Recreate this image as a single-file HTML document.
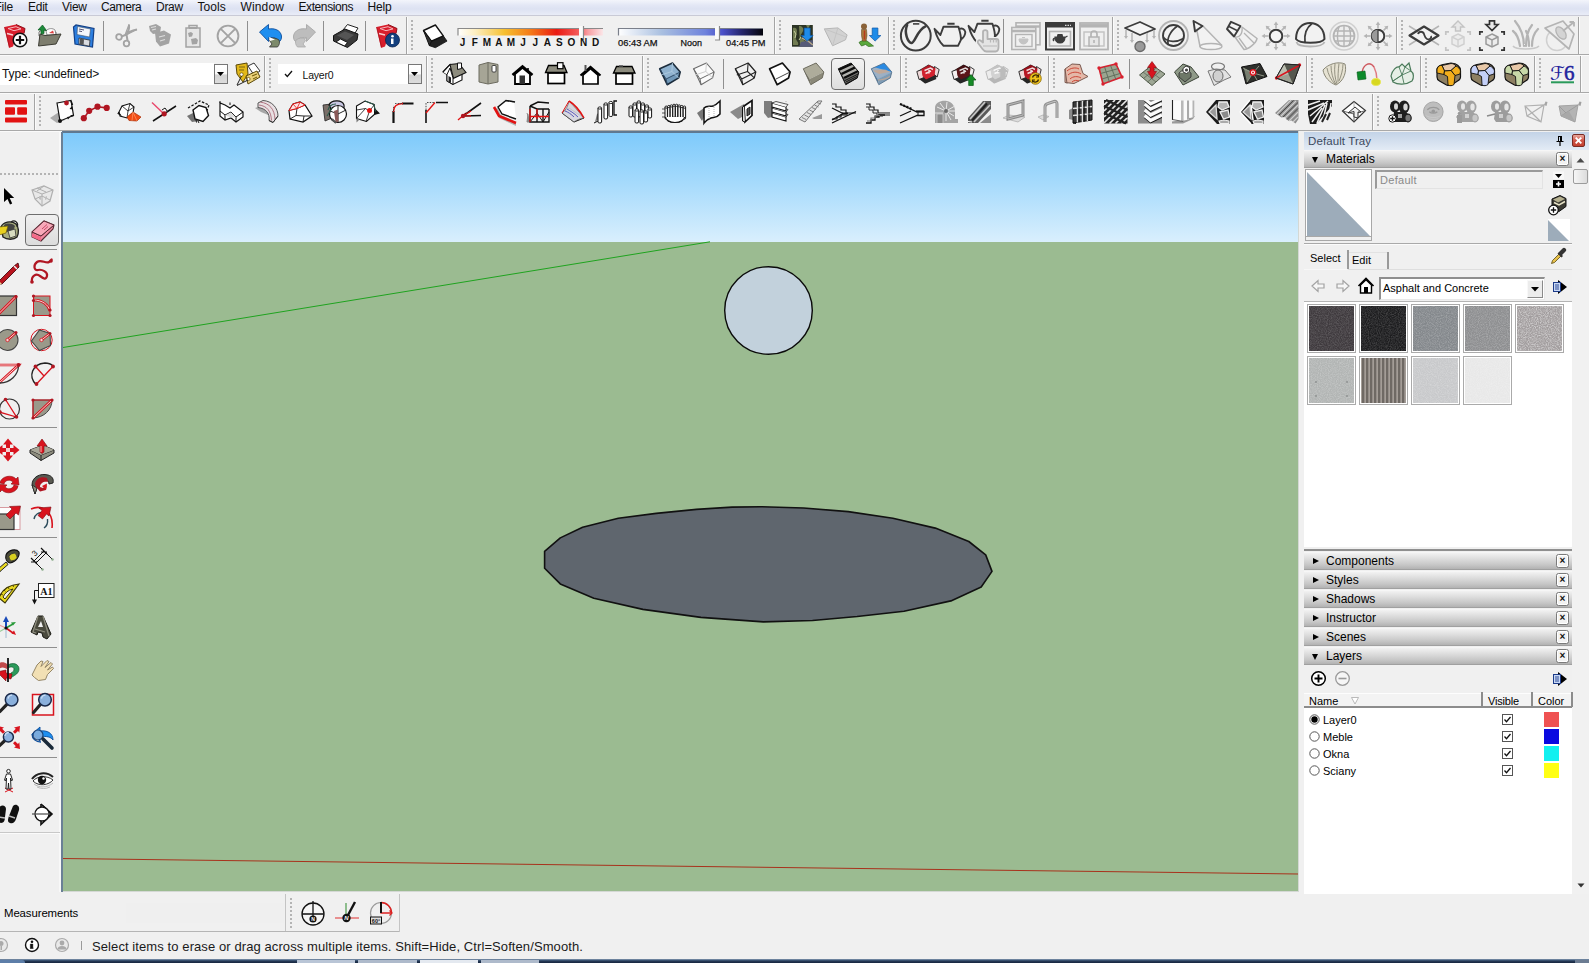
<!DOCTYPE html>
<html><head><meta charset="utf-8"><title>SketchUp</title>
<style>
html,body{margin:0;padding:0}
body{width:1589px;height:963px;position:relative;overflow:hidden;background:#f0f0f0;font-family:"Liberation Sans",sans-serif;font-size:12px;color:#000}
.a{position:absolute}
.t{position:absolute;white-space:nowrap;line-height:1}
svg{position:absolute;overflow:visible}
.hl{position:absolute;height:1px;left:0;width:1589px}
.vl{position:absolute;width:1px}
.grip{position:absolute;width:3px;background-image:radial-gradient(circle at 1px 1px,#b4b4b4 0.9px,transparent 1.2px);background-size:3px 4px}
.hdr{position:absolute;left:1304px;width:268px;height:18px;background:linear-gradient(#f2f2f2,#dedede 35%,#c6c6c6 75%,#b2b2b2);border-top:1px solid #f6f6f6;border-bottom:1px solid #a0a0a0;box-sizing:border-box}
.hdr .t{left:22px;top:2px;font-size:12px;letter-spacing:0}
.hdr i{position:absolute;left:7px;top:5px;width:0;height:0}
.hdr i.r{border-left:6px solid #000;border-top:3.5px solid transparent;border-bottom:3.5px solid transparent;left:9px;top:5px}
.hdr i.d{border-top:6px solid #000;border-left:3.5px solid transparent;border-right:3.5px solid transparent;left:8px;top:6px}
.xb{position:absolute;left:252px;top:1px;width:11px;height:12px;border:1px solid #7a7a7a;border-radius:2.500px;background:#f2f2f2;box-shadow:inset 0 0 0 1px #fff;font-size:10px;font-weight:bold;line-height:11px;text-align:center;color:#111}
</style></head>
<body>
<!-- menu bar -->
<div class="a" style="left:0;top:0;width:1589px;height:15px;background:linear-gradient(#f3f5fb 0,#e3e7f5 35%,#dde2f2 60%,#e9ecf7 100%)"></div>
<div class="hl" style="top:15px;background:#c9cad6"></div>
<div class="t" style="left:-5.5px;top:1px;font-size:12px;letter-spacing:-0.25px;color:#111">File</div>
<div class="t" style="left:28px;top:1px;font-size:12px;letter-spacing:-0.25px;color:#111">Edit</div>
<div class="t" style="left:62px;top:1px;font-size:12px;letter-spacing:-0.27px;color:#111">View</div>
<div class="t" style="left:101px;top:1px;font-size:12px;letter-spacing:-0.4px;color:#111">Camera</div>
<div class="t" style="left:156px;top:1px;font-size:12px;letter-spacing:-0.28px;color:#111">Draw</div>
<div class="t" style="left:197.5px;top:1px;font-size:12px;letter-spacing:0.06px;color:#111">Tools</div>
<div class="t" style="left:240.5px;top:1px;font-size:12px;letter-spacing:0.14px;color:#111">Window</div>
<div class="t" style="left:298.5px;top:1px;font-size:12px;letter-spacing:-0.41px;color:#111">Extensions</div>
<div class="t" style="left:367.5px;top:1px;font-size:12px;letter-spacing:-0.2px;color:#111">Help</div>
<!-- toolbar row lines -->
<div class="hl" style="top:54px;background:#a9a9a9"></div>
<div class="hl" style="top:55px;background:#fafafa"></div>
<div class="hl" style="top:92px;background:#a9a9a9"></div>
<div class="hl" style="top:93px;background:#fafafa"></div>
<div class="hl" style="top:130px;background:#a9a9a9"></div>
<div class="hl" style="top:131px;background:#fafafa"></div>
<!-- row1 -->
<div class="vl" style="left:103px;top:21px;height:30px;background:#8f8f8f"></div>
<div class="vl" style="left:247px;top:21px;height:30px;background:#8f8f8f"></div>
<div class="vl" style="left:323px;top:21px;height:30px;background:#8f8f8f"></div>
<div class="vl" style="left:365px;top:21px;height:30px;background:#8f8f8f"></div>
<div class="vl" style="left:406px;top:17px;height:37px;background:#a4a4a4"></div>
<div class="vl" style="left:407px;top:17px;height:37px;background:#fbfbfb"></div>
<div class="grip" style="left:411px;top:20px;height:32px"></div>
<div class="vl" style="left:774px;top:17px;height:37px;background:#a4a4a4"></div>
<div class="vl" style="left:775px;top:17px;height:37px;background:#fbfbfb"></div>
<div class="grip" style="left:779px;top:20px;height:32px"></div>
<div class="vl" style="left:888px;top:17px;height:37px;background:#a4a4a4"></div>
<div class="vl" style="left:889px;top:17px;height:37px;background:#fbfbfb"></div>
<div class="grip" style="left:893px;top:20px;height:32px"></div>
<div class="vl" style="left:1003px;top:19px;height:34px;background:#8f8f8f"></div>
<div class="vl" style="left:1112px;top:17px;height:37px;background:#a4a4a4"></div>
<div class="vl" style="left:1113px;top:17px;height:37px;background:#fbfbfb"></div>
<div class="grip" style="left:1117px;top:20px;height:32px"></div>
<div class="vl" style="left:1396px;top:17px;height:37px;background:#a4a4a4"></div>
<div class="vl" style="left:1397px;top:17px;height:37px;background:#fbfbfb"></div>
<div class="grip" style="left:1401px;top:20px;height:32px"></div>
<div class="vl" style="left:1578px;top:17px;height:37px;background:#a4a4a4"></div>
<div class="vl" style="left:1579px;top:17px;height:37px;background:#fbfbfb"></div>
<svg style="left:0;top:0" width="1589" height="60" viewBox="0 0 1589 60" font-family="Liberation Sans, sans-serif">
<g transform="translate(4,24)"><path d="M0.500 3L12 0.500l9 4-1 5-6 1-2 3-3 9-4 1.500z" fill="#d81e2c"/><path d="M4 4.500l8-1.800 5 2.200-7 1.800z" stroke="#f6b8bc" stroke-width="1" fill="none"/><path d="M3 9.500l6 1.500" stroke="#f8d0d2" stroke-width="1.600" fill="none"/><path d="M12 0.500l9 4-1 5" fill="none" stroke="#8e0f18" stroke-width="1"/><path d="M0.500 3l5 20" stroke="#a8121c" stroke-width=".8"/><circle cx="16" cy="16" r="6.800" fill="#fff" stroke="#111" stroke-width="1.500"/><path d="M16 11.800v8.400M11.800 16h8.400" stroke="#111" stroke-width="2.200"/></g>
<g transform="translate(37,24)"><path d="M2 8l1-1 5-1 2 2h9v4H2z" fill="#f4f4f0" stroke="#555" stroke-width=".8"/><path d="M9 7c2-3 7-3 9-1l1 5h-9z" fill="#fff" stroke="#777" stroke-width=".8"/><path d="M12 9l4-2.500 1 3z" fill="#d44"/><path d="M1.500 22L3 10l5 1.500 16-1.500-5 10z" fill="#7d7d6e" stroke="#3c3c34" stroke-width="1"/><path d="M1 6l4.500-5 4 5.500-2.500-.5v3.500l-3 .5V6z" fill="#1d8a3a" stroke="#0d5a22" stroke-width=".7"/></g>
<g transform="translate(72,24)"><path d="M1.500 3L4 1l18 3.500L20.500 23 3 20z" fill="#2d7fe0" stroke="#123f86" stroke-width="1.200"/><path d="M5.500 2.500l13 2.500-1 8-12.500-2.500z" fill="#f4f6fb" stroke="#456" stroke-width=".6"/><path d="M7 5l5 1M7 7l3 .6" stroke="#446" stroke-width=".9"/><path d="M7 14l11 2.200-.6 6L7 20z" fill="#d9dbe0" stroke="#333" stroke-width=".8"/><path d="M8 14.500l4 .8-.4 5.500L8 20z" fill="#555"/></g>
<g transform="translate(114,24)"><path d="M15 0.500c.5 4-1 8-3.500 10.500L7.500 12.500M23 5.500c-4 .5-8 2.500-10.500 5l1 6" fill="none" stroke="#a3a3a3" stroke-width="2"/><path d="M15 0.500L11 11M23 5.500L12 11" stroke="#a3a3a3" stroke-width="1.200"/><circle cx="5" cy="13" r="2.800" fill="#f0f0f0" stroke="#a3a3a3" stroke-width="1.800"/><circle cx="12.500" cy="19.500" r="2.800" fill="#f0f0f0" stroke="#a3a3a3" stroke-width="1.800"/></g>
<g transform="translate(148,24)"><path d="M1 2l7-2 5 3-1 6-7 1-3-3z" fill="#a3a3a3"/><path d="M7 9l9-2.500 7 4-2 9-9 3-4-5z" fill="#a3a3a3"/><path d="M3 3.500l5-1M4 6l4-1M11 13l6-1.500M12 17l5-1.500" stroke="#ddd" stroke-width="1.200"/></g>
<g transform="translate(185,24)"><path d="M1 4h3V1.500h8V4h3v19H1z" fill="#e6e6e6" stroke="#a3a3a3" stroke-width="1.500"/><path d="M4 4h8" stroke="#a3a3a3" stroke-width="2"/><path d="M3 9l3-1 2 1.500-1 3-3 .5zM6 15l5-1 2 2-1 4-5 .5z" fill="#a3a3a3"/></g>
<g transform="translate(228,36)"><circle r="10.400" fill="none" stroke="#a3a3a3" stroke-width="1.900"/><path d="M-7.200 -7.200L7.200 7.200M7.200 -7.200L-7.200 7.200" stroke="#a3a3a3" stroke-width="1.900"/></g>
<g transform="translate(259,24)"><path d="M0.500 8L9.500 0.500l0 4.500c6-1 12 1 13 7 .3 3-1 5-3 6.500 0-4-5-5.500-10-5l0 4z" fill="#1e8ff0" stroke="#0d4f9e" stroke-width=".9"/><path d="M10.500 14.500c3-1 7-.5 9.500 1.500 1 2 .5 5-1.500 7l-8 0 2.500-3-2.500-3.500 1-.5z" fill="#7d8a6b" stroke="#333" stroke-width=".8"/><path d="M10 13l6 2.500-5 1.500z" fill="#fff"/></g>
<g transform="translate(293,24)"><path d="M22.500 8L13.500 0.500l0 4.500c-6-1-12 1-13 7-.3 3 1 5 3 6.500 0-4 5-5.500 10-5l0 4z" fill="#bdbdbd" stroke="#a8a8a8" stroke-width=".9"/><path d="M12.500 14.500c-3-1-7-.5-9.500 1.500-1 2-.5 5 1.500 7l8 0-2.500-3 2.500-3.500-1-.5z" fill="#c4c4c4" stroke="#aaa" stroke-width=".8"/></g>
<g transform="translate(333,24)"><path d="M10 6l4.500-5.500L25 4l-3.500 6z" fill="#fff" stroke="#222" stroke-width="1"/><path d="M0.500 11.500L12 5l13 5-1 6-9.500 7.500L0.500 17z" fill="#3a3a3a" stroke="#111" stroke-width="1"/><path d="M4 11.500l8-4 9 3.500-7 5z" fill="#555"/><path d="M3 18l4.500-3 7 3.500-3 3.500z" fill="#fff" stroke="#111" stroke-width=".9"/></g>
<g transform="translate(376,24)"><path d="M0.500 3L12 0.500l9 4-1 5-6 1-2 3-3 9-4 1.500z" fill="#d81e2c"/><path d="M4 4.500l8-1.800 5 2.200-7 1.800z" stroke="#f6b8bc" stroke-width="1" fill="none"/><path d="M3 9.500l6 1.500" stroke="#f8d0d2" stroke-width="1.600" fill="none"/><path d="M12 0.500l9 4-1 5" fill="none" stroke="#8e0f18" stroke-width="1"/><path d="M0.500 3l5 20" stroke="#a8121c" stroke-width=".8"/><circle cx="16.500" cy="16" r="7" fill="#14407e" stroke="#0a2550" stroke-width=".8"/><circle cx="16.500" cy="12.300" r="1.300" fill="#fff"/><path d="M15 14.500h2.500v5.500H15z" fill="#fff"/></g>
<g transform="translate(422,24)"><path d="M9.400 17.100L21.300 11.800 25 17.100 13.400 23.700 7.400 21.700z" fill="#222" stroke="#111" stroke-width=".8" stroke-linejoin="round"/><path d="M1.500 6.500L13.400 1l7.900 10.800L9.400 17.100z" fill="#fff" stroke="#111" stroke-width="1.400" stroke-linejoin="round"/><path d="M1.500 6.500l7.900 10.600-2 4.600z" fill="#333" stroke="#111" stroke-width="1" stroke-linejoin="round"/></g>
<defs><linearGradient id="mg" x1="0" x2="1"><stop offset="0" stop-color="#fff"/><stop offset=".12" stop-color="#fdeec0"/><stop offset=".32" stop-color="#f6c030"/><stop offset=".5" stop-color="#f47a18"/><stop offset=".68" stop-color="#ea1a12"/><stop offset=".83" stop-color="#f45a5a"/><stop offset=".9" stop-color="#f7a0a4"/><stop offset="1" stop-color="#fbe6e8"/></linearGradient>
<linearGradient id="tg" x1="0" x2="1"><stop offset="0" stop-color="#fff"/><stop offset=".3" stop-color="#a9bfe0"/><stop offset=".6" stop-color="#6f83dc"/><stop offset=".72" stop-color="#4a4fc8"/><stop offset=".85" stop-color="#26266e"/><stop offset="1" stop-color="#05050c"/></linearGradient></defs>
<rect x="458" y="29" width="145" height="6.500" fill="url(#mg)"/><path d="M458 35.500V28.500H603" fill="none" stroke="#8a8a8a" stroke-width="1.200"/>
<rect x="579" y="26" width="5" height="14" fill="#fafafa"/><path d="M583.500 26v14" stroke="#8a8a8a" stroke-width="1.200"/>
<text x="462.6" y="46.300" font-size="10" font-weight="bold" text-anchor="middle" fill="#111">J</text>
<text x="474.7" y="46.300" font-size="10" font-weight="bold" text-anchor="middle" fill="#111">F</text>
<text x="486.8" y="46.300" font-size="10" font-weight="bold" text-anchor="middle" fill="#111">M</text>
<text x="498.9" y="46.300" font-size="10" font-weight="bold" text-anchor="middle" fill="#111">A</text>
<text x="511.0" y="46.300" font-size="10" font-weight="bold" text-anchor="middle" fill="#111">M</text>
<text x="523.1" y="46.300" font-size="10" font-weight="bold" text-anchor="middle" fill="#111">J</text>
<text x="535.2" y="46.300" font-size="10" font-weight="bold" text-anchor="middle" fill="#111">J</text>
<text x="547.3" y="46.300" font-size="10" font-weight="bold" text-anchor="middle" fill="#111">A</text>
<text x="559.4" y="46.300" font-size="10" font-weight="bold" text-anchor="middle" fill="#111">S</text>
<text x="571.5" y="46.300" font-size="10" font-weight="bold" text-anchor="middle" fill="#111">O</text>
<text x="583.6" y="46.300" font-size="10" font-weight="bold" text-anchor="middle" fill="#111">N</text>
<text x="595.7" y="46.300" font-size="10" font-weight="bold" text-anchor="middle" fill="#111">D</text>
<rect x="618.500" y="29" width="144.500" height="6.500" fill="url(#tg)"/><path d="M618.500 35.500V28.500H763" fill="none" stroke="#7a7f8a" stroke-width="1.200"/>
<rect x="715" y="26" width="5" height="14" fill="#fafafa"/><path d="M719.500 26v14H715" stroke="#8a8a8a" stroke-width="1.200" fill="none"/>
<text x="618" y="46.300" font-size="9.500" fill="#111" stroke="#111" stroke-width=".25" textLength="39.500" lengthAdjust="spacingAndGlyphs">06:43 AM</text>
<text x="680.500" y="46.300" font-size="9.500" fill="#111" stroke="#111" stroke-width=".25" textLength="21.500" lengthAdjust="spacingAndGlyphs">Noon</text>
<text x="726" y="46.300" font-size="9.500" fill="#111" stroke="#111" stroke-width=".25" textLength="39.500" lengthAdjust="spacingAndGlyphs">04:45 PM</text>
<g transform="translate(792,25)"><rect x="0" y="0" width="20.800" height="21.700" fill="#2c3424"/><path d="M1 3c2-1 4 0 4 3s-2 5-1 8 3 3 2 6H1zM7 1c3 0 5 2 4 5s-3 3-2 6 4 3 5 6l-6 2zM14 0h4l-2 4z" fill="#7e8a5a" opacity=".85"/><path d="M2 6l2 3-1 4M9 12l-2 3" stroke="#c8d0a0" stroke-width="1" fill="none"/><path d="M9 17l11.800-2v6.700H7z" fill="#555a78"/><path d="M10 13l6 3 4.800 4" stroke="#b8a888" stroke-width="1.400" fill="none"/><path d="M12.200 3h6v7.500h3l-6 5.600-6-5.600h3z" fill="#1e8be8" stroke="#0e57a8" stroke-width=".7"/></g>
<g transform="translate(0,0)"><path d="M824.300 28.900L837.900 27.900 847.100 34.900 845.500 39.800 832.600 45.800z" fill="#d2d2d2" stroke="#b6b6b6" stroke-width="1"/><path d="M824.300 28.900L846 37M837.900 27.900L832.600 45.800" stroke="#c2c2c2" stroke-width=".8" fill="none"/></g>
<g transform="translate(859,23)"><path d="M0 19.500c2-2 6-2.500 8-1.500l6.500 5-5 .5-3-2-4 1.500z" fill="#5aa83c" stroke="#2d6a1c" stroke-width=".7"/><circle cx="5" cy="3.600" r="3" fill="#8a6238"/><path d="M2.500 6.500h5l.5 6-1 5.500H3.500l-1-5.500z" fill="#a8783c" stroke="#5a3a14" stroke-width=".5"/><path d="M5.500 7.500v9" stroke="#b83a1a" stroke-width="1.400"/><path d="M13.200 5h5.700v7.500h3l-5.800 5.600-5.800-5.600h2.900z" fill="#1e8be8" stroke="#0e57a8" stroke-width=".7"/></g>
<g transform="translate(915.8,35.7)"><circle r="14.900" fill="none" stroke="#3c3c3c" stroke-width="2"/><path d="M-8.650 -10.700C-12 -3 -8 6.500 -4.500 7.200C-1 8 1 -5.500 9.700 -9.300" fill="none" stroke="#3c3c3c" stroke-width="2.500" stroke-linecap="round"/><path d="M-2.800 -11.800h6.300" stroke="#3c3c3c" stroke-width="1.600"/></g>
<g transform="translate(934,23)"><path d="M0.500 5.800L6.400 12 9.500 3.700H24.400C25.400 6.900 27.500 13 26.800 17.200L24 22.800H9.500C5.300 19 2.600 13.800 0.500 5.800zM25.400 5.800C28 5 30.500 5.500 31.300 8.900 31.300 12 29 15 27.100 16.500M13.300 0.800H20.600" fill="none" stroke="#3c3c3c" stroke-width="1.900" stroke-linejoin="round"/></g>
<g transform="translate(968,20)"><path d="M0.500 5.800L6.400 12 9.500 3.700H24.400C25.400 6.900 27.500 13 26.800 17.200L24 22.800H9.500C5.300 19 2.600 13.800 0.500 5.800zM25.400 5.800C28 5 30.500 5.500 31.300 8.900 31.300 12 29 15 27.100 16.500M13.300 0.800H20.600" fill="none" stroke="#3c3c3c" stroke-width="1.900" stroke-linejoin="round"/><path d="M15 12c0-2.500 4.500-2.500 4.500 0v7h9c1.500 0 2 1 2 2v6c0 3-1 4.500-3 4.500h-9c-2 0-3-1-4-2.500l-4.500-6c-1-2 1-3.500 2.500-2.500l2.500 2z" fill="#ececec" stroke="#f0f0f0" stroke-width="4"/><path d="M15 12c0-2.500 4.500-2.500 4.500 0v7h9c1.500 0 2 1 2 2v6c0 3-1 4.500-3 4.500h-9c-2 0-3-1-4-2.500l-4.500-6c-1-2 1-3.500 2.500-2.500l2.500 2z" fill="#e4e4e4" stroke="#b2b2b2" stroke-width="1.800" stroke-linejoin="round"/><path d="M22.500 19v3.500M25.500 19v3.500M28.200 19.500v3M15 26h14" stroke="#b8b8b8" stroke-width="1.200"/></g>
<g transform="translate(1011,22)"><rect x="5" y="0.800" width="24" height="22" fill="#f0f0f0" stroke="#b4b4b4" stroke-width="1.600"/><path d="M5 4.500h24" stroke="#b4b4b4" stroke-width="2.400"/><rect x="0.800" y="5.500" width="24" height="22" fill="#f0f0f0" stroke="#b4b4b4" stroke-width="1.600"/><path d="M1 9h24" stroke="#b4b4b4" stroke-width="2.600"/><rect x="4.500" y="12.500" width="16.500" height="12" fill="none" stroke="#b4b4b4" stroke-width="1.400"/><path d="M8 17h9c0 3-2 5-4.500 5S8 20 8 17zM11 15.500h3" fill="#c4c4c4" stroke="#c4c4c4"/></g>
<g transform="translate(1045,22)"><rect x="1" y="1" width="28" height="26.500" fill="#f0f0f0" stroke="#3c3c3c" stroke-width="2"/><path d="M1 3.500h28" stroke="#3c3c3c" stroke-width="4"/><path d="M20 3.300h6" stroke="#ddd" stroke-width="1.200" stroke-dasharray="1.500 1"/><rect x="4.500" y="9.500" width="21" height="14.500" fill="none" stroke="#b4b4b4" stroke-width="1.600"/><path d="M10 15h10c0 3.500-2 6-5 6s-5-2.500-5-6zM13 12.500h4l.5 2h-5zM10 16c-2 0-2.500 2-1 3M20 15.500l2.500-1.500" fill="#3c3c3c" stroke="#3c3c3c" stroke-width="1.200"/></g>
<g transform="translate(1079,22)"><rect x="1" y="1" width="28" height="26.500" fill="#f0f0f0" stroke="#b4b4b4" stroke-width="1.800"/><path d="M1 3.800h28" stroke="#b4b4b4" stroke-width="3.500"/><rect x="5" y="10" width="20" height="14" fill="none" stroke="#c4c4c4" stroke-width="1.500"/><rect x="10" y="15" width="10" height="9" fill="#e6e6e6" stroke="#b4b4b4" stroke-width="1.500"/><path d="M12 15v-3c0-4 6-4 6 0v3" fill="none" stroke="#b4b4b4" stroke-width="1.700"/><path d="M15 18v3" stroke="#b4b4b4" stroke-width="1.600"/></g>
<g transform="translate(1124,21)"><path d="M1 7L16 1l15 7-15 6z" fill="#f4f4f4" stroke="#3c3c3c" stroke-width="1.800" stroke-linejoin="round"/><g stroke="#b4b4b4" stroke-width="1.500" fill="#b4b4b4"><path d="M2 9v7M8 12v8M23 12v8M30 9v7"/><path d="M0 15h4l-2 3zM6 19h4l-2 3zM21 19h4l-2 3zM28 15h4l-2 3z" stroke="none"/></g><circle cx="16" cy="25.500" r="5" fill="#9a9a9a" stroke="#6a6a6a" stroke-width="1.400"/></g>
<g transform="translate(1173.5,35.5)"><circle r="14.500" fill="none" stroke="#b4b4b4" stroke-width="1.800"/><circle r="10.500" fill="#f2f2f2" stroke="#3c3c3c" stroke-width="1.900"/><path d="M4 -9.500C-4 -4 -7 4 -5 9.500M-10 2c5 5 13 5 20 1" fill="none" stroke="#3c3c3c" stroke-width="1.700"/></g>
<g transform="translate(1192,20)"><path d="M5 11L8 26.500c2 3 18 3 21.500-1.500L11 6" fill="#f2f2f2" stroke="#b4b4b4" stroke-width="1.500"/><ellipse cx="19" cy="26.500" rx="11" ry="3" fill="#f4f4f4" stroke="#b4b4b4" stroke-width="1.400"/><path d="M1.500 1L10.500 6 3 11.500z" fill="#f4f4f4" stroke="#3c3c3c" stroke-width="1.900" stroke-linejoin="round"/></g>
<g transform="translate(1226,21)"><path d="M9 16l9 12.500c4 0 12-6 13-11L16 6" fill="#f2f2f2" stroke="#b4b4b4" stroke-width="1.500"/><path d="M13 17l8 11M18 12l10 10M9 16c4 1 8-3 7-10" fill="none" stroke="#b4b4b4" stroke-width="1.300"/><path d="M5 0.800L14.500 5 8 15.500 1 8z" fill="#f4f4f4" stroke="#3c3c3c" stroke-width="1.900" stroke-linejoin="round"/><path d="M3 5.500l8 4" stroke="#3c3c3c" stroke-width="1.400"/></g>
<g transform="translate(1276,36)"><g stroke="#b4b4b4" stroke-width="1.600" fill="#b4b4b4"><g transform="rotate(0)"><path d="M0 -8v-4"/><path d="M-2.300 -11h4.600L0 -14.500z" stroke="none"/></g><g transform="rotate(45)"><path d="M0 -8v-4"/><path d="M-2.300 -11h4.600L0 -14.500z" stroke="none"/></g><g transform="rotate(90)"><path d="M0 -8v-4"/><path d="M-2.300 -11h4.600L0 -14.500z" stroke="none"/></g><g transform="rotate(135)"><path d="M0 -8v-4"/><path d="M-2.300 -11h4.600L0 -14.500z" stroke="none"/></g><g transform="rotate(180)"><path d="M0 -8v-4"/><path d="M-2.300 -11h4.600L0 -14.500z" stroke="none"/></g><g transform="rotate(225)"><path d="M0 -8v-4"/><path d="M-2.300 -11h4.600L0 -14.500z" stroke="none"/></g><g transform="rotate(270)"><path d="M0 -8v-4"/><path d="M-2.300 -11h4.600L0 -14.500z" stroke="none"/></g><g transform="rotate(315)"><path d="M0 -8v-4"/><path d="M-2.300 -11h4.600L0 -14.500z" stroke="none"/></g></g><circle r="6.300" fill="#f4f4f4" stroke="#3c3c3c" stroke-width="2"/></g>
<g transform="translate(1295,22)"><path d="M1.500 20c1.500 6 26 6 28 0" fill="none" stroke="#b4b4b4" stroke-width="1.800"/><path d="M1 17C1 6 8 1 15 1s14.500 5 14.500 16c-3 5-25 5-28.500 0z" fill="#f2f2f2" stroke="#3c3c3c" stroke-width="2"/><path d="M17 1.500C11 6 9 12 10 20.500" fill="none" stroke="#3c3c3c" stroke-width="1.800"/></g>
<g transform="translate(1344,36)"><circle r="14" fill="none" stroke="#d0d0d0" stroke-width="1.500"/><circle r="10.500" fill="#ededed" stroke="#b4b4b4" stroke-width="1.700"/><path d="M-10.500 0h21M-9 -5h18M-9 5h18M0 -10.500v21M-5 -9.500c-2 6-2 13 0 19M5 -9.500c2 6 2 13 0 19" fill="none" stroke="#b4b4b4" stroke-width="1.400"/></g>
<g transform="translate(1378,36)"><g stroke="#b4b4b4" stroke-width="1.600" fill="#b4b4b4"><g transform="rotate(0)"><path d="M0 -8v-4"/><path d="M-2.300 -11h4.600L0 -14.500z" stroke="none"/></g><g transform="rotate(45)"><path d="M0 -8v-4"/><path d="M-2.300 -11h4.600L0 -14.500z" stroke="none"/></g><g transform="rotate(90)"><path d="M0 -8v-4"/><path d="M-2.300 -11h4.600L0 -14.500z" stroke="none"/></g><g transform="rotate(135)"><path d="M0 -8v-4"/><path d="M-2.300 -11h4.600L0 -14.500z" stroke="none"/></g><g transform="rotate(180)"><path d="M0 -8v-4"/><path d="M-2.300 -11h4.600L0 -14.500z" stroke="none"/></g><g transform="rotate(225)"><path d="M0 -8v-4"/><path d="M-2.300 -11h4.600L0 -14.500z" stroke="none"/></g><g transform="rotate(270)"><path d="M0 -8v-4"/><path d="M-2.300 -11h4.600L0 -14.500z" stroke="none"/></g><g transform="rotate(315)"><path d="M0 -8v-4"/><path d="M-2.300 -11h4.600L0 -14.500z" stroke="none"/></g></g><circle r="6.300" fill="#f4f4f4" stroke="#3c3c3c" stroke-width="2"/><path d="M0 -6.300a6.300 6.300 0 0 0 0 12.600z" fill="#9a9a9a"/><path d="M0 -6.300v12.600" stroke="#3c3c3c" stroke-width="1.300"/></g>
<g transform="translate(1408,25)"><g stroke="#b4b4b4" stroke-width="1.500"><path d="M1 1l8 5M31 1l-8 5M1 20l8-5M31 20l-8-5"/></g><path d="M1.500 10.500L16 1.500l14.500 9L16 19.500z" fill="#f2f2f2" stroke="#3c3c3c" stroke-width="2.200" stroke-linejoin="round"/><path d="M10 9c1-3 5-3 6 0s1 4 3 5 5-1 4-3" fill="none" stroke="#3c3c3c" stroke-width="1.800"/></g>
<g transform="translate(1445,20)"><g fill="none" stroke="#c4c4c4" stroke-width="1.700"><path d="M0.800 15v-3.200H4M22 11.800h3.200V15M0.800 27v3.200H4M22 30.200h3.200V27"/></g><path d="M13 14l6 3v7l-6 3-6-3v-7z" fill="#ececec" stroke="#d0d0d0" stroke-width="1.500"/><path d="M7 17l6 3 6-3M13 20v7" fill="none" stroke="#d0d0d0" stroke-width="1.400"/><path d="M13 1l6 6h-3.500v4h-5V7H7z" fill="#e8e8e8" stroke="#c4c4c4" stroke-width="1.400"/></g>
<g transform="translate(1479,20)"><g fill="none" stroke="#333" stroke-width="1.700"><path d="M0.800 15v-3.200H4M22 11.800h3.200V15M0.800 27v3.200H4M22 30.200h3.200V27"/></g><path d="M13 14l6 3v7l-6 3-6-3v-7z" fill="#ececec" stroke="#9a9a9a" stroke-width="1.500"/><path d="M7 17l6 3 6-3M13 20v7" fill="none" stroke="#9a9a9a" stroke-width="1.400"/><path d="M13 10.500l-6-6h3.500V0.800h5V4.500H19z" fill="#e8e8e8" stroke="#333" stroke-width="1.700"/></g>
<g transform="translate(1512,20)"><g fill="none" stroke="#b4b4b4" stroke-width="2.200" stroke-linecap="round"><path d="M3 1c5 6 9 14 9 25M1 11c4 3 6 8 7 15M20 5c-4 5-6 12-6 21M26 9c-4 4-6 10-6 17M14 11c2 4 3 9 3 15"/></g><path d="M1 26c3 4 22 4 26 0" fill="none" stroke="#c8c8c8" stroke-width="1.600"/></g>
<g transform="translate(1544,20)"><circle cx="13" cy="20" r="10.500" fill="none" stroke="#d0d0d0" stroke-width="1.500"/><path d="M1 8L19 1l11 13-5 15z" fill="#ececec" stroke="#b4b4b4" stroke-width="1.700" stroke-linejoin="round"/><ellipse cx="17" cy="13" rx="4" ry="7" transform="rotate(-35 17 13)" fill="#d4d4d4" stroke="#b4b4b4" stroke-width="1.300"/><path d="M19 11L30 2M30 2h-4.500M30 2v4.500" stroke="#b4b4b4" stroke-width="1.800" fill="none"/></g>
</svg>
<!-- row2 -->
<div class="a" style="left:0;top:63px;width:214px;height:22px;background:#fff"></div>
<div class="t" style="left:2px;top:68px;font-size:12px;letter-spacing:-.14px;color:#111">Type: &lt;undefined&gt;</div>
<div class="a" style="left:214px;top:64px;width:14px;height:20px;box-sizing:border-box;border:1px solid #767676;background:linear-gradient(#fff 0,#fafafa 50%,#d2d2d2 55%,#dcdcdc)"></div>
<svg style="left:217px;top:72px" width="7" height="4" viewBox="0 0 7 4"><path d="M0 0h7L3.500 4z" fill="#000"/></svg>
<div class="vl" style="left:264px;top:56px;height:36px;background:#a4a4a4"></div>
<div class="vl" style="left:265px;top:56px;height:36px;background:#fbfbfb"></div>
<div class="grip" style="left:269px;top:58px;height:32px"></div>
<div class="a" style="left:278px;top:64px;width:130px;height:20px;background:#fff"></div>
<svg style="left:284px;top:70px" width="9" height="8" viewBox="0 0 9 8"><path d="M1 4l2.300 2.500L8 1" fill="none" stroke="#111" stroke-width="1.300"/></svg>
<div class="t" style="left:302.500px;top:69.500px;font-size:10.500px;letter-spacing:-.2px;color:#111">Layer0</div>
<div class="a" style="left:408px;top:64px;width:14px;height:20px;box-sizing:border-box;border:1px solid #767676;background:linear-gradient(#fff 0,#fafafa 50%,#d2d2d2 55%,#dcdcdc)"></div>
<svg style="left:411px;top:72px" width="7" height="4" viewBox="0 0 7 4"><path d="M0 0h7L3.500 4z" fill="#000"/></svg>
<div class="vl" style="left:426px;top:56px;height:36px;background:#a4a4a4"></div>
<div class="vl" style="left:427px;top:56px;height:36px;background:#fbfbfb"></div>
<div class="grip" style="left:431px;top:58px;height:32px"></div>
<div class="vl" style="left:642px;top:56px;height:36px;background:#a4a4a4"></div>
<div class="vl" style="left:643px;top:56px;height:36px;background:#fbfbfb"></div>
<div class="grip" style="left:647px;top:58px;height:32px"></div>
<div class="vl" style="left:723px;top:59px;height:30px;background:#8f8f8f"></div>
<div class="vl" style="left:900px;top:56px;height:36px;background:#a4a4a4"></div>
<div class="vl" style="left:901px;top:56px;height:36px;background:#fbfbfb"></div>
<div class="grip" style="left:905px;top:58px;height:32px"></div>
<div class="vl" style="left:1048px;top:56px;height:36px;background:#a4a4a4"></div>
<div class="vl" style="left:1049px;top:56px;height:36px;background:#fbfbfb"></div>
<div class="grip" style="left:1053px;top:58px;height:32px"></div>
<div class="vl" style="left:1129px;top:59px;height:30px;background:#8f8f8f"></div>
<div class="vl" style="left:1306px;top:56px;height:36px;background:#a4a4a4"></div>
<div class="vl" style="left:1307px;top:56px;height:36px;background:#fbfbfb"></div>
<div class="grip" style="left:1311px;top:58px;height:32px"></div>
<div class="vl" style="left:1420px;top:56px;height:36px;background:#a4a4a4"></div>
<div class="vl" style="left:1421px;top:56px;height:36px;background:#fbfbfb"></div>
<div class="grip" style="left:1425px;top:58px;height:32px"></div>
<div class="vl" style="left:1534px;top:56px;height:36px;background:#a4a4a4"></div>
<div class="vl" style="left:1535px;top:56px;height:36px;background:#fbfbfb"></div>
<div class="grip" style="left:1539px;top:58px;height:32px"></div>
<div class="vl" style="left:1580px;top:56px;height:36px;background:#a4a4a4"></div>
<div class="vl" style="left:1581px;top:56px;height:36px;background:#fbfbfb"></div>
<div class="a" style="left:831px;top:58px;width:34px;height:32px;box-sizing:border-box;border:1px solid #6e6e6e;border-radius:4px;background:linear-gradient(#f2f2f2,#dedede)"></div>
<svg style="left:0;top:0" width="1589" height="100" viewBox="0 0 1589 100" font-family="Liberation Sans, sans-serif">
<g transform="translate(235,62)"><path d="M13 4l6-3 6 8-6 4z" fill="#fff" stroke="#333" stroke-width="1"/><path d="M1 3l11-2 1 11-5 8-6-8z" fill="#e2b81a" stroke="#5a4808" stroke-width="1"/><path d="M4 5h6M4 8h5" stroke="#7a6410" stroke-width="1.200"/><circle cx="6.500" cy="12.500" r="1.700" fill="#fff" stroke="#5a4808" stroke-width=".7"/><path d="M11 14l11-5 3 6-12 7z" fill="#ecd27a" stroke="#5a4808" stroke-width="1"/><circle cx="13.500" cy="17" r="1.600" fill="#fff" stroke="#5a4808" stroke-width=".7"/><path d="M17 14l5-2M18 17l4-2" stroke="#7a6410" stroke-width="1.100"/><path d="M6.500 14L2 23M13 18L2 23.500" stroke="#222" stroke-width="1"/></g>
<g transform="translate(442,62)"><path d="M5 11v8l6 3.500 9-4.500v-8z" fill="#fff" stroke="#111" stroke-width="1.100"/><path d="M1 10L8 2.500l9 -1 7 9-13 6z" fill="#8d8c7e" stroke="#111" stroke-width="1.100"/><path d="M1 10l7-7.500 3.500 14" fill="#fff" stroke="#111" stroke-width="1.100"/><path d="M5 12.500L8 6l3 10v6.500l-6-3.500z" fill="#fff" stroke="#111" stroke-width="1"/><path d="M6.500 14l2.500 1.500v5.500l-2.500-1.500z" fill="#222"/><path d="M15.500 1h4v5.500l-4 1z" fill="#fff" stroke="#111" stroke-width="1"/></g>
<g transform="translate(478,62)"><path d="M1 3l9-2.500 10 2V20l-10 2-9-2z" fill="#a6a596" stroke="#6d6c60" stroke-width="1"/><path d="M10 0.500V22" stroke="#6d6c60" stroke-width="1"/><rect x="14" y="3.500" width="4" height="6.500" rx="1" fill="#fff" stroke="#333" stroke-width=".9"/></g>
<g transform="translate(511,65)"><path d="M1.500 10L11.500 1.500 21.500 10" fill="none" stroke="#000" stroke-width="2.600" stroke-linejoin="miter"/><path d="M4 9v10h15V9l-7.500-6.300z" fill="#fff" stroke="#000" stroke-width="1.800"/><rect x="8.500" y="10.500" width="5.500" height="8.500" fill="#333"/><path d="M17 3v4" stroke="#000" stroke-width="1.600"/></g>
<g transform="translate(545,62)"><rect x="3" y="11" width="16.500" height="10.500" fill="#fff" stroke="#000" stroke-width="1.700"/><path d="M0.500 10.500L3.500 3.500h15.500l3 7z" fill="#8d8c7e" stroke="#000" stroke-width="1.300"/><rect x="12.500" y="0.700" width="5.500" height="6" fill="#fff" stroke="#000" stroke-width="1.200"/></g>
<g transform="translate(579,64)"><path d="M1.500 11.500L11.500 3 21.500 11.500" fill="none" stroke="#000" stroke-width="2.200"/><path d="M4 11v9h15v-9l-7.500-6.500z" fill="#fff" stroke="#000" stroke-width="1.700"/><path d="M6.500 1v6" stroke="#555" stroke-width="2"/></g>
<g transform="translate(613,65)"><rect x="3" y="8.500" width="16.500" height="10.500" fill="#fff" stroke="#000" stroke-width="1.700"/><path d="M0.500 8L3.500 1.500h15.500l3 6.500z" fill="#8d8c7e" stroke="#000" stroke-width="1.300"/><path d="M6 1h4" stroke="#555" stroke-width="1.500"/></g>
<g transform="translate(659.4,62)"><path d="M0.300 6.800L13.100 1 20.800 10 6.700 17z" fill="#8fb2cf"/><path d="M0.300 6.800L6.700 17 7.800 22.700z" fill="#5f87a8"/><path d="M6.700 17L20.800 10 19.300 15.900 7.800 22.700z" fill="#7198b8"/><path d="M0.300 6.800L13.100 1 20.800 10 19.300 15.900 7.800 22.700z" fill="none" stroke="#1c2c3c" stroke-width="1.6" stroke-linejoin="round"/><path d="M0.300 6.800L6.700 17 20.800 10M6.700 17L7.800 22.700" fill="none" stroke="#2c4a68" stroke-width="1"/><path d="M13.100 1L12.500 9.500 19.300 15.900M12.500 9.500L1.800 13" fill="none" stroke="#b4cee2" stroke-width=".8"/></g>
<g transform="translate(693.3,62)"><path d="M0.300 6.800L13.100 1 20.800 10 6.700 17z" fill="#fbfbfb"/><path d="M0.300 6.800L6.700 17 7.800 22.700z" fill="#fbfbfb"/><path d="M6.700 17L20.800 10 19.300 15.900 7.800 22.700z" fill="#fbfbfb"/><path d="M0.300 6.800L13.100 1 20.800 10 19.300 15.900 7.800 22.700z" fill="none" stroke="#6a6a6a" stroke-width="1.1" stroke-linejoin="round"/><path d="M0.300 6.800L6.700 17 20.800 10M6.700 17L7.800 22.700" fill="none" stroke="#6a6a6a" stroke-width="1"/><path d="M13.100 1L12.500 9.500 19.300 15.900M12.500 9.500L1.800 13" fill="none" stroke="#c8c8c8" stroke-width=".9"/></g>
<g transform="translate(735,62)"><path d="M0.300 6.800L13.100 1 20.800 10 6.700 17z" fill="none"/><path d="M0.300 6.800L6.700 17 7.800 22.700z" fill="none"/><path d="M6.700 17L20.800 10 19.300 15.900 7.800 22.700z" fill="none"/><path d="M0.300 6.800L13.100 1 20.800 10 19.300 15.900 7.800 22.700z" fill="none" stroke="#222" stroke-width="1.2" stroke-linejoin="round"/><path d="M0.300 6.800L6.700 17 20.800 10M6.700 17L7.800 22.700M13.100 1L12.500 9.500 19.300 15.900M12.500 9.500L1.800 13" fill="none" stroke="#222" stroke-width="1.100"/></g>
<g transform="translate(769.3,62)"><path d="M0.300 6.800L13.100 1 20.800 10 6.700 17z" fill="#fff"/><path d="M0.300 6.800L6.700 17 7.800 22.700z" fill="#fff"/><path d="M6.700 17L20.800 10 19.300 15.900 7.800 22.700z" fill="#fff"/><path d="M0.300 6.800L13.100 1 20.800 10 19.300 15.900 7.800 22.700z" fill="none" stroke="#111" stroke-width="1.7" stroke-linejoin="round"/><path d="M6.700 17L20.800 10" fill="none" stroke="#333" stroke-width=".9"/></g>
<g transform="translate(803,62)"><path d="M0.300 6.800L13.100 1 20.800 10 6.700 17z" fill="#aeac9b"/><path d="M0.300 6.800L6.700 17 7.800 22.700z" fill="#6f6d60"/><path d="M6.700 17L20.800 10 19.300 15.900 7.800 22.700z" fill="#8b8979"/><path d="M0.300 6.800L13.100 1 20.800 10 19.300 15.900 7.800 22.700z" fill="none" stroke="#6d6b5e" stroke-width="1" stroke-linejoin="round"/></g>
<g transform="translate(838,62)"><path d="M0.300 6.800L13.100 1 20.800 10 6.700 17z" fill="#b2b2ae"/><path d="M0.300 6.800L6.700 17 7.800 22.700z" fill="#333"/><path d="M6.700 17L20.800 10 19.300 15.900 7.800 22.700z" fill="#6a6a66"/><path d="M0.3 6.8L13.1 1.0 14.6 2.8 1.6 8.8zM2.9 10.9L16.2 4.6 17.7 6.4 4.1 12.9zM5.4 15.0L19.3 8.2 20.8 10.0 6.7 17.0z" fill="#0c0c0c"/><path d="M7 18.500L20.300 12M7.300 20.300L19.800 14M7.600 22L19.400 15.700" stroke="#1a1a1a" stroke-width="1"/><path d="M0.300 6.800L13.100 1 20.800 10 19.300 15.900 7.800 22.700z" fill="none" stroke="#111" stroke-width="1" stroke-linejoin="round"/></g>
<g transform="translate(871,62)"><path d="M0.300 6.800L13.100 1 20.800 10 6.700 17z" fill="#2a8ae2"/><path d="M0.300 6.800L6.700 17 7.800 22.700z" fill="#5a7a94"/><path d="M6.700 17L20.800 10 19.300 15.900 7.800 22.700z" fill="#7f9cb4"/><path d="M0.300 6.800L3.500 5.300 20.800 10 6.700 17z" fill="#9db0c4"/><path d="M1.500 8.500L14 7.500 19 9.800 8 12z" fill="#c8a890" opacity=".8"/><path d="M7 18c4 0 8-1 12-3.500" stroke="#c8a890" stroke-width="1.200" fill="none" opacity=".8"/><path d="M0.300 6.800L13.100 1 20.800 10 19.300 15.900 7.800 22.700z" fill="none" stroke="#4a6a88" stroke-width="0.8" stroke-linejoin="round"/></g>
<g transform="translate(916,63)"><path d="M1 8.500L12.500 1.500 23 6.500 21 14 9 20.500 3 16z" fill="#262626"/><path d="M0.800 8.500L6 6.500 8 14.500 3 16.500z" fill="#eed8d8" stroke="#262626" stroke-width=".9"/><path d="M18.500 3.500L23.200 6.500 21.200 14 17.800 11z" fill="#eed8d8" stroke="#262626" stroke-width=".9"/><path d="M5.500 6L13 2 19.500 5.500 18.500 12.500 10 16.500 6.500 13z" fill="#d2222e"/><path d="M5.500 6L13 2 19.500 5.500 12 9z" fill="#7a0a12" opacity=".35"/><path d="M8.500 7.500l6-2.500 2.500 1.500M9.500 10.500l5.500-2.500M13 7v3.500" stroke="#fff" stroke-width="1.500" fill="none" opacity=".85"/><path d="M6 15L10 17 18.800 13 20.500 16 9.500 20.500z" fill="#262626"/></g>
<g transform="translate(951,63)"><path d="M1 8.500L12.500 1.500 23 6.500 21 14 9 20.500 3 16z" fill="#262626"/><path d="M0.800 8.500L6 6.500 8 14.500 3 16.500z" fill="#f4f0f0" stroke="#262626" stroke-width=".9"/><path d="M18.500 3.500L23.200 6.500 21.200 14 17.800 11z" fill="#f4f0f0" stroke="#262626" stroke-width=".9"/><path d="M5.500 6L13 2 19.500 5.500 18.500 12.500 10 16.500 6.500 13z" fill="#5a1418"/><path d="M5.500 6L13 2 19.500 5.500 12 9z" fill="#200608" opacity=".35"/><path d="M8.500 7.500l6-2.500 2.500 1.500M9.500 10.500l5.500-2.500M13 7v3.500" stroke="#fff" stroke-width="1.500" fill="none" opacity=".85"/><path d="M6 15L10 17 18.800 13 20.500 16 9.500 20.500z" fill="#262626"/><path d="M20 11.500l5 5.500h-2.700v5.500h-4.600V17H15z" fill="#168a26" stroke="#0a5a14" stroke-width=".7"/></g>
<g transform="translate(985,63)"><path d="M1 8.500L12.500 1.500 23 6.500 21 14 9 20.500 3 16z" fill="#b6b6b6"/><path d="M0.800 8.500L6 6.500 8 14.500 3 16.500z" fill="#ececec" stroke="#b6b6b6" stroke-width=".9"/><path d="M18.500 3.500L23.200 6.500 21.200 14 17.800 11z" fill="#ececec" stroke="#b6b6b6" stroke-width=".9"/><path d="M5.500 6L13 2 19.500 5.500 18.500 12.500 10 16.500 6.500 13z" fill="#d2d2d2"/><path d="M5.500 6L13 2 19.500 5.500 12 9z" fill="#a8a8a8" opacity=".35"/><path d="M8.500 7.500l6-2.500 2.500 1.500M9.500 10.500l5.500-2.500M13 7v3.500" stroke="#fff" stroke-width="1.500" fill="none" opacity=".85"/><path d="M6 15L10 17 18.800 13 20.500 16 9.500 20.500z" fill="#b6b6b6"/><path d="M18 3l5.500 6h-2.800v7h-5.400V9h-2.800z" fill="#bcbcbc"/></g>
<g transform="translate(1018,63)"><path d="M1 8.500L12.500 1.500 23 6.500 21 14 9 20.500 3 16z" fill="#262626"/><path d="M0.800 8.500L6 6.500 8 14.500 3 16.500z" fill="#eed8d8" stroke="#262626" stroke-width=".9"/><path d="M18.500 3.500L23.200 6.500 21.200 14 17.800 11z" fill="#eed8d8" stroke="#262626" stroke-width=".9"/><path d="M5.500 6L13 2 19.500 5.500 18.500 12.500 10 16.500 6.500 13z" fill="#b81622"/><path d="M5.500 6L13 2 19.500 5.500 12 9z" fill="#5a060c" opacity=".35"/><path d="M8.500 7.500l6-2.500 2.500 1.500M9.500 10.500l5.500-2.500M13 7v3.500" stroke="#fff" stroke-width="1.500" fill="none" opacity=".85"/><path d="M6 15L10 17 18.800 13 20.500 16 9.500 20.500z" fill="#262626"/><circle cx="17.500" cy="15.500" r="5.800" fill="#f0c41a" stroke="#8a6a08" stroke-width=".8"/><path d="M14.500 14.500a3.200 3.200 0 0 1 5.500-1.500M20.500 16.500a3.200 3.200 0 0 1-5.500 1.500" fill="none" stroke="#3a2a04" stroke-width="1.300"/><path d="M20.500 11.500v2.500H18M14.500 19.500V17H17" fill="none" stroke="#3a2a04" stroke-width="1.100"/></g>
<g transform="translate(1063,62)"><path d="M2 7l7-5 8 .5 3 9 5 3-14 7-9-1z" fill="#e4b8a8" stroke="#7a5a50" stroke-width="1"/><path d="M4 9c3-3 9-4 12-2M5 13c3-3 9-4 13-1M7 17c3-3 8-3 11-1M9 20c2-2 5-2 7-1" fill="none" stroke="#c83a2a" stroke-width=".9"/><path d="M2 7l2 14.500" stroke="#7a5a50" stroke-width="1"/></g>
<g transform="translate(1097,62)"><path d="M2 6l17-4 6 13-19 7z" fill="#9aa590" stroke="#d8202e" stroke-width="1.600"/><path d="M7.500 4.700l5 15.500M13.500 3.300l5.500 14.500M3.500 11.500l18-5M5 17l18-5.500" stroke="#5c6a58" stroke-width=".9"/><circle cx="2" cy="6" r="1.700" fill="#d8202e"/><circle cx="19" cy="2" r="1.700" fill="#d8202e"/><circle cx="25" cy="15" r="1.700" fill="#d8202e"/><circle cx="6" cy="22" r="1.700" fill="#d8202e"/></g>
<g transform="translate(1139,61)"><path d="M0.500 14L13 4l13 9-13 11.500z" fill="#9fa896" stroke="#4e5848" stroke-width="1"/><path d="M4 11l13 10M8 8l13 9.500M4.500 17.500L17 7M8.500 21L21.500 10" stroke="#5e6a58" stroke-width=".8"/><path d="M13 0.500l4.500 6h-2.500v4h2.500l-4.500 7-4.500-7H11v-4H8.500z" fill="#d8141e" stroke="#8a0c12" stroke-width=".6"/></g>
<g transform="translate(1174,63)"><path d="M0.500 9L9 1l8 3 8 10-16 8z" fill="#8f9a88" stroke="#3c4438" stroke-width="1"/><path d="M5 10l5-4 7 4-6 5z" fill="#cfd4c8" stroke="#333" stroke-width=".9"/><path d="M5 10v4l6 5 6-5v-4" fill="#6e7868" stroke="#333" stroke-width=".9"/><path d="M9 5.500l3-2.500 3.500 1.500v4l-3 2-3.500-1.500z" fill="#fff" stroke="#222" stroke-width=".9"/><circle cx="12.500" cy="7" r="1.600" fill="#444"/></g>
<g transform="translate(1207,62)"><path d="M1 9l8-2 9 1 6 7-7 3-10 5.500z" fill="#e2e2e2" stroke="#777" stroke-width="1"/><ellipse cx="11" cy="4.500" rx="6.500" ry="3.500" fill="none" stroke="#777" stroke-width="1.200"/><ellipse cx="11" cy="14" rx="5" ry="6" fill="#d0d0d0" stroke="#6a6a6a" stroke-width="1"/></g>
<g transform="translate(1241,63)"><path d="M0.500 4L19 0.500l7 13L5 21z" fill="#2e302c" stroke="#111" stroke-width="1"/><path d="M3 6l9 4 6-7M12 10l-6 9M12 10l11 3M12 10l4 7M2 5l10 5" stroke="#9aa090" stroke-width=".9" fill="none"/><path d="M3 5.500l9 4.500-6 9z" fill="#8a9282" opacity=".8"/><circle cx="12" cy="9.500" r="2.700" fill="#fff" stroke="#d8141e" stroke-width="1.400"/><circle cx="12" cy="9.500" r="1" fill="#d8141e"/></g>
<g transform="translate(1275,63)"><path d="M1 15L9 1l16 1-7 19z" fill="#9c9f92" stroke="#222" stroke-width="1"/><path d="M9 1l9 20L25 2z" fill="#55574e"/><path d="M9 1l4.500 10L1 15z" fill="#bcbfb2"/><path d="M1 15L25 2" stroke="#d8141e" stroke-width="1.500"/><circle cx="1.500" cy="15" r="1.700" fill="#d8141e"/><circle cx="24.500" cy="2" r="1.700" fill="#d8141e"/><path d="M1 15L9 1l16 1-7 19z" fill="none" stroke="#222" stroke-width="1"/></g>
<g transform="translate(1322,62)"><path d="M1 8C6 2 16 -1 23 2c2 7-1 17-9 21C8 21 2 15 1 8z" fill="#e6e2d2" stroke="#8a8878" stroke-width="1"/><path d="M5 6c1 6 4 12 8 16M9 3.500c0 7 2 14 5 19M13 2c-1 7 0 15 2 20M17 1.500c-1 7-1 14-1 19M21 2c0 6-2 12-4 17" fill="none" stroke="#8a8878" stroke-width=".9"/></g>
<g transform="translate(1356,62)"><path d="M6 13C6 2 14 -1 18 5c2 4 3 8 3 13" fill="none" stroke="#e07a82" stroke-width="1.500"/><path d="M6 13C6 2 14 -1 18 5" fill="none" stroke="#a33" stroke-width=".5"/><path d="M1 10l8-1 1 8-8 1z" fill="#0c8a2a" stroke="#075a1a" stroke-width=".6"/><ellipse cx="20" cy="20" rx="4.500" ry="3.500" fill="#d8d820" stroke="#e8e860" stroke-width="1"/></g>
<g transform="translate(1390,62)"><path d="M1 14C2 8 7 4 9 5l3-3 3 3 4-4 2 8c3 2 3 7 1 10-6 4-14 4-19 1z" fill="#e6efe6" stroke="#4a7a5a" stroke-width="1.200"/><path d="M9 5l3 8 3-8M12 13l-9 6M12 13l9 -4M12 13l2 8.500M15 5l6 4M3 19l9-6" fill="none" stroke="#4a7a5a" stroke-width=".9"/></g>
<g transform="translate(1436,62)"><path d="M1 7c1-3 3-4 6-4.500L15 1c3 0 5 .5 7 2.500 2 1.500 2.500 3 2.500 5.500v6c0 2-1 3-3 4l-6 4c-2 .8-3 .8-5 0l-7-4c-2-1-2.500-2-2.500-4z" fill="#8d7f62" stroke="#111" stroke-width="1.200"/><path d="M6 3.500l9-2c2 0 4 1 5 2.500l-5 4.500-6.500.5z" fill="#e8c8a8" stroke="#111" stroke-width=".9"/><path d="M1 7c1-3 3-4 5-3.500L8.500 9l-.5 3.500-7-1.500z" fill="#f2ae1c" stroke="#111" stroke-width=".9"/><path d="M20 4c2 1 4 2.500 4.500 5l-.5 3-5 1.500-4-5z" fill="#f2ae1c" stroke="#111" stroke-width=".9"/><path d="M8.500 9l6.500-.5 4 5-1 9c-2 1.500-4 1.500-6 .5l-.5-8.500L8 12.500z" fill="#f2ae1c" stroke="#111" stroke-width=".9"/></g>
<g transform="translate(1470,62)"><path d="M1 7c1-3 3-4 6-4.500L15 1c3 0 5 .5 7 2.500 2 1.500 2.500 3 2.500 5.500v6c0 2-1 3-3 4l-6 4c-2 .8-3 .8-5 0l-7-4c-2-1-2.500-2-2.500-4z" fill="#8d7f62" stroke="#111" stroke-width="1.200"/><path d="M6 3.500l9-2c2 0 4 1 5 2.500l-5 4.500-6.500.5z" fill="#e8c8a8" stroke="#111" stroke-width=".9"/><path d="M1 7c1-3 3-4 5-3.500L8.500 9l-.5 3.500-7-1.500z" fill="#c4d0f8" stroke="#111" stroke-width=".9"/><path d="M20 4c2 1 4 2.500 4.500 5l-.5 3-5 1.500-4-5z" fill="#c4d0f8" stroke="#111" stroke-width=".9"/><path d="M8.500 9l6.500-.5 4 5-1 9c-2 1.500-4 1.500-6 .5l-.5-8.500L8 12.500z" fill="#c4d0f8" stroke="#111" stroke-width=".9"/></g>
<g transform="translate(1504,62)"><path d="M1 7c1-3 3-4 6-4.500L15 1c3 0 5 .5 7 2.500 2 1.500 2.500 3 2.500 5.500v6c0 2-1 3-3 4l-6 4c-2 .8-3 .8-5 0l-7-4c-2-1-2.500-2-2.500-4z" fill="#8d7f62" stroke="#111" stroke-width="1.200"/><path d="M6 3.500l9-2c2 0 4 1 5 2.500l-5 4.500-6.500.5z" fill="#e8c8a8" stroke="#111" stroke-width=".9"/><path d="M1 7c1-3 3-4 5-3.500L8.500 9l-.5 3.500-7-1.500z" fill="#c8d8a8" stroke="#111" stroke-width=".9"/><path d="M20 4c2 1 4 2.500 4.500 5l-.5 3-5 1.500-4-5z" fill="#c8d8a8" stroke="#111" stroke-width=".9"/><path d="M8.500 9l6.500-.5 4 5-1 9c-2 1.500-4 1.500-6 .5l-.5-8.500L8 12.500z" fill="#c8d8a8" stroke="#111" stroke-width=".9"/></g>
<text x="1550" y="80" font-size="20" fill="#22229c"><tspan font-family="DejaVu Sans, DejaVu Serif, serif" font-size="19">ℱ</tspan><tspan font-family="Liberation Serif, serif" font-size="21" dx="-1" stroke="#22229c" stroke-width=".5">6</tspan></text>
<rect x="1551" y="81.300" width="23" height="2" fill="#2a9a5a"/>
</svg>
<!-- row3 -->
<div class="vl" style="left:34px;top:94px;height:36px;background:#a4a4a4"></div>
<div class="vl" style="left:35px;top:94px;height:36px;background:#fbfbfb"></div>
<div class="grip" style="left:39px;top:96px;height:32px"></div>
<div class="vl" style="left:1372px;top:94px;height:36px;background:#a4a4a4"></div>
<div class="vl" style="left:1373px;top:94px;height:36px;background:#fbfbfb"></div>
<div class="grip" style="left:1377px;top:96px;height:32px"></div>
<svg style="left:0;top:0" width="1589" height="135" viewBox="0 0 1589 135" font-family="Liberation Sans, sans-serif">
<g transform="translate(5,100)"><rect x="0" y="0" width="22" height="4.600" rx="1" fill="#e21212"/><rect x="0" y="7.300" width="10" height="7.400" rx="1" fill="#e21212"/><rect x="12.200" y="7.300" width="9.800" height="7.400" rx="1" fill="#e21212"/><rect x="0" y="17.600" width="22" height="4.800" rx="1" fill="#e21212"/></g>
<g transform="translate(50,100)"><path d="M0 18l9-6 6 8-8 3z" fill="#9a9a9a" opacity=".8"/><path d="M7 3l14-2.500 2.500 15L10 21z" fill="#fff" stroke="#111" stroke-width="1.200"/><path d="M21 1l1.500 4M23.500 15.500l-3 .5" stroke="#111" stroke-width="1.500"/><circle cx="16.500" cy="3" r="2.400" fill="#b01622"/><circle cx="10" cy="21" r="2" fill="#111"/><path d="M19.500 9l2.500-3 1 3.500zM17 17l3.500-.5-2.500 3z" fill="#111"/></g>
<g transform="translate(0,0)"><path d="M83.800 118.200L89.200 110.800 97.500 106.700 106.700 107.900" fill="none" stroke="#b01622" stroke-width="1.600"/><circle cx="83.800" cy="118.200" r="3.100" fill="#b01622"/><circle cx="89.200" cy="110.800" r="3.100" fill="#b01622"/><circle cx="97.500" cy="106.700" r="3.100" fill="#b01622"/><circle cx="106.700" cy="107.900" r="3.100" fill="#b01622"/></g>
<g transform="translate(118,103)"><path d="M1 9l3-6 8-2.500 4 3.500-1 6-6 5-7-2z" fill="#fff" stroke="#111" stroke-width="1.100"/><path d="M4 3l6 5 2-7.500M10 8l-1 7M10 8l6-4" fill="none" stroke="#111" stroke-width=".8"/><path d="M9 14l6-5 8 5-4 4-8-.5z" fill="#f24c14" stroke="#a8300a" stroke-width=".7"/><path d="M15 9l-1 8.700M15 9l4 9" stroke="#ff9a6a" stroke-width=".7"/><path d="M1 9l-1.200 1.500 3.500 2" fill="#111" stroke="#111"/></g>
<g transform="translate(152,102)"><path d="M0 0.500l11 10.500" stroke="#e8456a" stroke-width="1.400"/><path d="M1 19L24 4" stroke="#111" stroke-width="1.500"/><path d="M10 8l3-2 2.500 3.500" fill="#fff" stroke="#111" stroke-width="1"/><circle cx="12.200" cy="11.800" r="2.600" fill="#b01622"/></g>
<g transform="translate(186,100)"><path d="M1 16l6-3 6 8-7 1z" fill="#555" opacity=".8"/><path d="M2 8L14 1l9 4-3 8" fill="none" stroke="#111" stroke-width="1.300" stroke-dasharray="2.500 1.500"/><path d="M7 10l6-4.500 7 2 2.500 8-5.500 6-8-2.500z" fill="#fff" stroke="#111" stroke-width="1.400"/><path d="M10 20l.5 2.500M12 21l1 2" stroke="#111" stroke-width="1"/></g>
<g transform="translate(219,102)"><path d="M1 1v13l5 4 6-2 5 4 7-5v-5l-9-7-4 3-5-3z" fill="#fff" stroke="#111" stroke-width="1.200"/><path d="M1 9l5 4v5M6 13l6-3 5 5v5M17 15l7-5M11 3v-2.500M1 1v-2" fill="none" stroke="#111" stroke-width="1"/><path d="M6 13.500l6-3 5 5-5 0z" fill="#ddd"/></g>
<g transform="translate(254,100)"><path d="M1 8l6-2 10 5 2 6-12-5z" fill="#888" opacity=".7"/><path d="M4 3l5-2.500C18 1 24 8 24 16l-5 6.500-4-2c1-7-3-12-11-13z" fill="#e8dfe2" stroke="#555" stroke-width="1"/><path d="M6.500 2.200c9 1 14 7 14.500 17M5 5c8 1 12 6 12.500 15.500" fill="none" stroke="#a05a6a" stroke-width=".8"/><path d="M15 20.500l4 2 5-6.500" fill="none" stroke="#333" stroke-width="1"/></g>
<g transform="translate(288,101)"><path d="M1 9.500L5 3l7-2 5 3 7 11-9 6-13-3z" fill="#fff" stroke="#111" stroke-width="1.200"/><path d="M1 9.500l8-2 8-3.500M9 7.500l-1 7M8 14.500l-6 3.500M8 14.500l8 .500 8-0M16 15l-1 6" fill="none" stroke="#111" stroke-width=".9"/><path d="M1 9.500L5 3l7-2 5 3-8 3.500z" fill="#fbe4e4" stroke="#e21212" stroke-width="1"/><path d="M5 3l4 4.500M12 1l-3 6.500" stroke="#e21212" stroke-width=".8"/></g>
<g transform="translate(322,100)"><path d="M1 5l8-1 1 14-7 3z" fill="#7a6e68" stroke="#222" stroke-width=".8"/><path d="M7 5c2-5 13-6 15 0 1 3-2 6-6 6.500l-6-.5z" fill="#c9c8e4" stroke="#111" stroke-width="1.200"/><circle cx="16" cy="14" r="8.500" fill="#fff" stroke="#111" stroke-width="1.200"/><path d="M16 5.500v17M8 11l8 3 8-4" fill="none" stroke="#111" stroke-width=".9"/><path d="M12 11l4-1.500.5 12-3 1z" fill="#8a5a58"/><path d="M6 10c1-4 4-6 8-6M5 16l5-8" fill="none" stroke="#2a5a4a" stroke-width="1.100"/><path d="M10 19l4 4" stroke="#555" stroke-width="2"/></g>
<g transform="translate(356,100)"><path d="M0.500 6L9 1l9 3.500 1.500 9-9 8-10-3z" fill="#fff" stroke="#111" stroke-width="1.100"/><path d="M0.500 10l9-1.500 4 2.500 5-6.500M13.500 11l-3.500 10.500M0.500 18.500l9-10" fill="none" stroke="#111" stroke-width=".8"/><path d="M0.500 18l3 1.500-3 3z" fill="#777"/><path d="M18 7.500l6 6-6 1.500z" fill="#111"/><circle cx="13.500" cy="10.500" r="2.500" fill="#e21212"/><path d="M9 1l9 3.500 1.500 7" fill="none" stroke="#2a5a4a" stroke-width="1"/></g>
<g transform="translate(391,102)"><path d="M2.500 21V9M11 1.500h11.500" stroke="#111" stroke-width="2.200" fill="none"/><path d="M2.500 10C2.500 4 6 1.500 12 1.500" fill="none" stroke="#e21212" stroke-width="1.300"/><path d="M2.500 9V3.500M4 1.500h7" stroke="#333" stroke-width=".8" stroke-dasharray="1.500 1.200" fill="none"/></g>
<g transform="translate(424,101)"><path d="M2 22V9M12 1.500h12" stroke="#111" stroke-width="1.600" fill="none"/><path d="M2 12L11 1.500" fill="none" stroke="#e21212" stroke-width="1.300"/><path d="M2 9V2M3 1.500h8" stroke="#333" stroke-width=".9" stroke-dasharray="1.500 1.200" fill="none"/></g>
<g transform="translate(457,102)"><path d="M1 18L9 11" stroke="#e21212" stroke-width="1.300"/><path d="M6 14L24 1M6 14l18-0.500" stroke="#111" stroke-width="1.600" fill="none"/><path d="M6 14l8-5M6 14l8-.2" stroke="#e21212" stroke-width="1.200"/><circle cx="6" cy="14" r="2.200" fill="#b01622"/></g>
<g transform="translate(492,100)"><path d="M3 9l4 9 17 8v-4L9 15 5.500 8z" fill="#888" opacity=".6"/><path d="M2 7l5 9 17 7" fill="none" stroke="#e21212" stroke-width="2.600"/><path d="M22 2l-8-1.500L6 7l4 7 14 5z" fill="#fff"/><path d="M24 19L10 14 6 7l8-6.500 9 1.500" fill="none" stroke="#111" stroke-width="1.400"/><path d="M14 0.500l9 1.500" stroke="#111" stroke-width="1.200" stroke-dasharray="3 1.500"/></g>
<g transform="translate(526,100)"><path d="M1 13l3 9M2 14l-1 8h3" fill="#888" stroke="#888"/><path d="M4 6l8-4 11 1M4 6v16h19V9M4 6l7 3h12M11 9v13M17 9v13" fill="none" stroke="#111" stroke-width="1.400"/><path d="M4 22l7-9 6 9 6-10" fill="none" stroke="#111" stroke-width="1"/><path d="M4 9v13M4 16.500h19M11 9v10" stroke="#e21212" stroke-width="1.300" fill="none"/></g>
<g transform="translate(561,100)"><path d="M1 13l7-5 15 10-10 4z" fill="#fff" stroke="#111" stroke-width="1"/><path d="M8 1C7 6 5 10 1 13l12 9c4-3 8-4 10-4C18 12 12 5 8 1z" fill="#d4d4dc" stroke="#555" stroke-width=".8" opacity=".9"/><path d="M8 1c5 3 11 10 15 17" fill="none" stroke="#e21212" stroke-width="1.500"/><path d="M6 9c3 2 7 4 11 8M4 11c3 1 6 3 9 6" fill="none" stroke="#3a3ab0" stroke-width=".8"/><path d="M8 1L1 13" stroke="#e21212" stroke-width="1"/></g>
<g transform="translate(594,100)"><path d="M1 22l5-4v-6l-3 2z" fill="#777"/><path d="M0 23l4-2" stroke="#111" stroke-width="1"/><path d="M4 8v14a1.8 1 0 0 0 3.6 0v-14" fill="#fff" stroke="#111" stroke-width="1"/><ellipse cx="5.8" cy="8" rx="1.8" ry="1.100" fill="#fff" stroke="#111" stroke-width=".9"/><path d="M10 4v14a1.8 1 0 0 0 3.6 0v-14" fill="#fff" stroke="#111" stroke-width="1"/><ellipse cx="11.8" cy="4" rx="1.8" ry="1.100" fill="#fff" stroke="#111" stroke-width=".9"/><path d="M15 2.5v13a1.8 1 0 0 0 3.6 0v-13" fill="#fff" stroke="#111" stroke-width="1"/><ellipse cx="16.8" cy="2.5" rx="1.8" ry="1.100" fill="#fff" stroke="#111" stroke-width=".9"/><path d="M23 1h-3v14h3" fill="none" stroke="#111" stroke-width="1.300"/></g>
<g transform="translate(628,100)"><path d="M1 7v9a1.8 1 0 0 0 3.6 0v-9" fill="#fff" stroke="#111" stroke-width="1"/><ellipse cx="2.8" cy="7" rx="1.8" ry="1.100" fill="#fff" stroke="#111" stroke-width=".9"/><path d="M5 4v12a1.8 1 0 0 0 3.6 0v-12" fill="#fff" stroke="#111" stroke-width="1"/><ellipse cx="6.8" cy="4" rx="1.8" ry="1.100" fill="#fff" stroke="#111" stroke-width=".9"/><path d="M9 2v14a1.8 1 0 0 0 3.6 0v-14" fill="#fff" stroke="#111" stroke-width="1"/><ellipse cx="10.8" cy="2" rx="1.8" ry="1.100" fill="#fff" stroke="#111" stroke-width=".9"/><path d="M13 4v12a1.8 1 0 0 0 3.6 0v-12" fill="#fff" stroke="#111" stroke-width="1"/><ellipse cx="14.8" cy="4" rx="1.8" ry="1.100" fill="#fff" stroke="#111" stroke-width=".9"/><path d="M17 6v11a1.8 1 0 0 0 3.6 0v-11" fill="#fff" stroke="#111" stroke-width="1"/><ellipse cx="18.8" cy="6" rx="1.8" ry="1.100" fill="#fff" stroke="#111" stroke-width=".9"/><path d="M20 9v8a1.8 1 0 0 0 3.6 0v-8" fill="#fff" stroke="#111" stroke-width="1"/><ellipse cx="21.8" cy="9" rx="1.8" ry="1.100" fill="#fff" stroke="#111" stroke-width=".9"/><path d="M7 10v12a1.8 1 0 0 0 3.6 0v-12" fill="#fff" stroke="#111" stroke-width="1"/><ellipse cx="8.8" cy="10" rx="1.8" ry="1.100" fill="#fff" stroke="#111" stroke-width=".9"/><path d="M12 11v12a1.8 1 0 0 0 3.6 0v-12" fill="#fff" stroke="#111" stroke-width="1"/><ellipse cx="13.8" cy="11" rx="1.8" ry="1.100" fill="#fff" stroke="#111" stroke-width=".9"/><path d="M16 12v9a1.8 1 0 0 0 3.6 0v-9" fill="#fff" stroke="#111" stroke-width="1"/><ellipse cx="17.8" cy="12" rx="1.8" ry="1.100" fill="#fff" stroke="#111" stroke-width=".9"/></g>
<g transform="translate(662,100)"><path d="M0 9h4M0 13h4M0 17h4" stroke="#555" stroke-width="1"/><ellipse cx="13" cy="17" rx="9.500" ry="5.500" fill="#fff" stroke="#111" stroke-width="1.200"/><path d="M3.0 7.1v11a1.2 1 0 0 0 2.4 0v-11" fill="#fff" stroke="#111" stroke-width="1"/><ellipse cx="4.2" cy="7.1" rx="1.2" ry="1.100" fill="#fff" stroke="#111" stroke-width=".9"/><path d="M5.6 6.5v11a1.2 1 0 0 0 2.4 0v-11" fill="#fff" stroke="#111" stroke-width="1"/><ellipse cx="6.8" cy="6.5" rx="1.2" ry="1.100" fill="#fff" stroke="#111" stroke-width=".9"/><path d="M8.2 5.9v11a1.2 1 0 0 0 2.4 0v-11" fill="#fff" stroke="#111" stroke-width="1"/><ellipse cx="9.399999999999999" cy="5.9" rx="1.2" ry="1.100" fill="#fff" stroke="#111" stroke-width=".9"/><path d="M10.8 5.3v11a1.2 1 0 0 0 2.4 0v-11" fill="#fff" stroke="#111" stroke-width="1"/><ellipse cx="12.0" cy="5.3" rx="1.2" ry="1.100" fill="#fff" stroke="#111" stroke-width=".9"/><path d="M13.4 5.3v11a1.2 1 0 0 0 2.4 0v-11" fill="#fff" stroke="#111" stroke-width="1"/><ellipse cx="14.6" cy="5.3" rx="1.2" ry="1.100" fill="#fff" stroke="#111" stroke-width=".9"/><path d="M16.0 5.9v11a1.2 1 0 0 0 2.4 0v-11" fill="#fff" stroke="#111" stroke-width="1"/><ellipse cx="17.2" cy="5.9" rx="1.2" ry="1.100" fill="#fff" stroke="#111" stroke-width=".9"/><path d="M18.6 6.5v11a1.2 1 0 0 0 2.4 0v-11" fill="#fff" stroke="#111" stroke-width="1"/><ellipse cx="19.8" cy="6.5" rx="1.2" ry="1.100" fill="#fff" stroke="#111" stroke-width=".9"/><path d="M21.2 7.1v11a1.2 1 0 0 0 2.4 0v-11" fill="#fff" stroke="#111" stroke-width="1"/><ellipse cx="22.4" cy="7.1" rx="1.2" ry="1.100" fill="#fff" stroke="#111" stroke-width=".9"/><path d="M3.500 17a9.500 5.500 0 0 0 19 0" fill="#fff" stroke="#111" stroke-width="1.200"/></g>
<g transform="translate(697,100)"><path d="M0 13l7-5v9l-2 4z" fill="#777"/><path d="M7 8c3-3 6-1 9-2s5-3 7-5v13c-3 4-6 3-9 4s-5 2-7 5z" fill="#fff" stroke="#111" stroke-width="1.500"/><path d="M12 6v13M17 5v12" stroke="#999" stroke-width=".7" stroke-dasharray="1 1"/></g>
<g transform="translate(730,100)"><path d="M0 12l14-8v12l-6 3z" fill="#8a8a8a"/><path d="M14 6l8-5.500v15L15 22z" fill="#fff" stroke="#111" stroke-width="1.700"/><path d="M14 6l-1.500 1v14l2.500 1" fill="#ddd" stroke="#111" stroke-width="1"/><path d="M17 9l3-2v7l-3 2z" fill="#555" stroke="#111" stroke-width=".9"/></g>
<g transform="translate(764,100)"><path d="M0 1h8v16l-4 1-4-5z" fill="#7d7d7d"/><path d="M8 13l14 4v4l-14-4z" fill="#fff" stroke="#111" stroke-width="1.100"/><path d="M8 13l4-1.500 12 3-2 2.500" fill="#f4f4f4" stroke="#111" stroke-width=".7"/><path d="M8 8l14 4v4l-14-4z" fill="#fff" stroke="#111" stroke-width="1.100"/><path d="M8 8l4-1.500 12 3-2 2.500" fill="#f4f4f4" stroke="#111" stroke-width=".7"/><path d="M8 3l14 4v4l-14-4z" fill="#fff" stroke="#111" stroke-width="1.100"/><path d="M8 3l4-1.500 12 3-2 2.500" fill="#f4f4f4" stroke="#111" stroke-width=".7"/><path d="M22 1v3" stroke="#999" stroke-width=".7" stroke-dasharray="1 1"/></g>
<g transform="translate(798,100)"><path d="M14 18l10-4v5h-8z" fill="#9a9a9a"/><path d="M1 19L20 1h4L7 22z" fill="#e4e4e4" stroke="#777" stroke-width="1"/><path d="M4 17.500l4 2M6.500 15l4 2M9 12.500l4 2M11.500 10l4 2M14 7.500l4 2M16.500 5l4 2M19 2.500l4 1.500" stroke="#777" stroke-width=".9"/></g>
<g transform="translate(832,103)"><path d="M0 1h4v3h5v3h5v3h10M0 16h5v-2h4v-2h6" fill="none" stroke="#111" stroke-width="1.200"/><path d="M10 10.500h6" stroke="#111" stroke-width="2"/><path d="M0 5l11 5.500L0 17M0 20L24 8.500" fill="none" stroke="#111" stroke-width="1.300"/></g>
<g transform="translate(866,103)"><path d="M0 1h4v3h4v3h4v3h12" fill="none" stroke="#111" stroke-width="1.200"/><path d="M0 4h3v3h4v3h4v3h6" fill="none" stroke="#111" stroke-width=".9"/><path d="M11 10h13v3H11z" fill="#888"/><path d="M0 20h5v-3h4v-3h4v-2h6" fill="none" stroke="#111" stroke-width="1.300"/><path d="M1 18h4v-3h4v-2.500h5" fill="none" stroke="#777" stroke-width="1.200"/></g>
<g transform="translate(900,103)"><path d="M0 1l16 7.500h8v4h-7L0 20M0 13l11-5" fill="none" stroke="#111" stroke-width="1.300"/><path d="M0 1l12 5" stroke="#111" stroke-width="2.200" stroke-dasharray="2.200 1.200"/><path d="M16 8.500h8" stroke="#111" stroke-width="2"/><path d="M18 9v4" stroke="#111" stroke-width="1"/></g>
<g transform="translate(934,100)"><path d="M1 8C1 2 8 0 13 1c5 1 8 5 8 10v8h3v4H1z" fill="#a4a4a4"/><path d="M3 23v-9h6v9" fill="#8a8a8a" stroke="#ccc" stroke-width=".8"/><path d="M12 11l9-5M12 11l9 0M12 11l8 5M12 11l5 9M12 11l0 10M12 11L3 7M12 11L6 3M12 11l1-9" stroke="#e8e8e8" stroke-width="1"/><circle cx="12" cy="11" r="2" fill="#666"/><path d="M1 13h8" stroke="#ddd" stroke-width="1"/></g>
<g transform="translate(968,100)"><path d="M0 18L15 1h8v8L10 23H0z" fill="#5a5a5a"/><path d="M2 19L17 2M6 22L22 5" stroke="#c8c8c8" stroke-width="1.600"/><path d="M4 20.500L19 3.500" stroke="#222" stroke-width="2"/><path d="M12 23l11-9v9z" fill="#8a8a8a"/><path d="M0 21.500l4 .5" stroke="#fff" stroke-width="1.200"/></g>
<g transform="translate(1003,100)"><path d="M0 18l6-3 16 2-7 5z" fill="#dcdcdc" stroke="#b0b0b0" stroke-width=".8"/><path d="M5 5l15-4v14L5 19z" fill="none" stroke="#8a8a8a" stroke-width="3"/><path d="M5 5l15-4v14L5 19z" fill="none" stroke="#b8b8b8" stroke-width="1"/></g>
<g transform="translate(1038,100)"><path d="M0 17l5-2 6 1.500L5 20z" fill="#dcdcdc" stroke="#b0b0b0" stroke-width=".8"/><path d="M7 22V7c0-2 1-3 3-3.500l6-2c2-.5 3 .5 3 2.500v14" fill="none" stroke="#8f8f8f" stroke-width="3"/><path d="M7 22V7c0-2 1-3 3-3.500l6-2c2-.5 3 .5 3 2.500v14" fill="none" stroke="#c4c4c4" stroke-width="1"/></g>
<g transform="translate(1069,100)"><path d="M0 10l4-2v12l-4-1z" fill="#8a8a8a"/><path d="M4 2l19-2v20L4 23z" fill="#3a3a3a" stroke="#111" stroke-width="1"/><path d="M4 23l3 .5" stroke="#111"/><path d="M8.500 1.500v21M13.500 1v21M18.500 .5v20.500M4 8.500l19-2M4 15.500l19-2" stroke="#e0e0e0" stroke-width="1.600"/><path d="M10 2v20M15 1.500v20M20 1v20" stroke="#111" stroke-width="1.200"/></g>
<g transform="translate(1104,100)"><rect x="0" y="0" width="23.500" height="23.500" fill="#222"/><g stroke="#e8e8e8" stroke-width="1.700"><path d="M0 5l5-5M0 11l11-11M0 17l17-17M0 23l23-23M5.500 23.500l18-18M11.500 23.500l12-12M17.500 23.500l6-6"/></g><g stroke="#222" stroke-width="2.200"><path d="M2 0l21.500 10M0 6l23.500 11M0 13l22 10.500"/></g></g>
<g transform="translate(1138,100)"><clipPath id="c33"><rect x="0" y="0" width="24" height="23.700"/></clipPath><g clip-path="url(#c33)"><rect x="0" y="0" width="24" height="23.700" fill="#8c8c8c"/><path d="M6.700 1.0L12.600 6.0 24 0.5" fill="none" stroke="#1a1a1a" stroke-width="1.600"/><path d="M6.700 -1.1L12.600 3.9 24 -1.6" fill="none" stroke="#fafafa" stroke-width="3.200"/><path d="M6.700 6.2L12.600 11.2 24 5.7" fill="none" stroke="#1a1a1a" stroke-width="1.600"/><path d="M6.700 4.1L12.600 9.1 24 3.6" fill="none" stroke="#fafafa" stroke-width="3.200"/><path d="M6.700 12.1L12.600 17.1 24 11.6" fill="none" stroke="#1a1a1a" stroke-width="1.600"/><path d="M6.700 10.0L12.600 15.0 24 9.5" fill="none" stroke="#fafafa" stroke-width="3.200"/><path d="M6.700 17.6L12.600 22.6 24 17.1" fill="none" stroke="#1a1a1a" stroke-width="1.600"/><path d="M6.700 15.5L12.600 20.5 24 15.0" fill="none" stroke="#fafafa" stroke-width="3.200"/></g></g>
<g transform="translate(1172,100)"><path d="M0 21.500l11-1.500 12-4-2 3-10 4.500H0z" fill="#9a9a9a"/><path d="M17.500 0.500h4.500v16.500l-4.500 1z" fill="#fafafa"/><path d="M20.500 0.500h1.800v16.500l-1.800.3z" fill="#b4b4b4"/><path d="M12 0.500h4.800v19l-4.800 1z" fill="#fafafa"/><path d="M15 0.500h2v18.800l-2 .4z" fill="#aaa"/><path d="M0.500 0.500h10.800v21l-10.800-2z" fill="#fbfbfb"/><path d="M9 0.500h2.500v21l-2.500-.5z" fill="#b8b8b8"/><path d="M0.500 0v20" stroke="#222" stroke-width="1.100"/><path d="M0.500 19.500l10.800 2" stroke="#555" stroke-width=".9"/></g>
<g transform="translate(1206,100)"><path d="M0 12L10 0h14v24H11z" fill="#1a1a1a"/><path d="M3 12l7-7 1 14z" fill="#9a9a9a" stroke="#ddd" stroke-width="1.300"/><path d="M13 2h8l2 5-7 3-4-3z" fill="#b4b4b4" stroke="#eee" stroke-width="1.300"/><path d="M14 12l8-2 1.500 7-6 2z" fill="#8a8a8a" stroke="#eee" stroke-width="1.300"/><path d="M13 21l5-1 5 1v2.500h-9z" fill="#aaa" stroke="#eee" stroke-width="1.200"/></g>
<g transform="translate(1240,100)"><path d="M0 12L10 0h14v24H11z" fill="#1a1a1a"/><path d="M3 12l7-7 1 14z" fill="#9a9a9a" stroke="#ddd" stroke-width="1.300"/><path d="M13 2h8l2 5-7 3-4-3z" fill="#b4b4b4" stroke="#eee" stroke-width="1.300"/><path d="M14 12l8-2 1.500 7-6 2z" fill="#8a8a8a" stroke="#eee" stroke-width="1.300"/><path d="M13 21l5-1 5 1v2.500h-9z" fill="#aaa" stroke="#eee" stroke-width="1.200"/><path d="M0 12L10 0M0 12l11 12" stroke="#fff" stroke-width="1.500"/><path d="M11 5l2 15" stroke="#fff" stroke-width="1.500"/></g>
<g transform="translate(1275,100)"><path d="M0 13L14 0h9.500v19l-3 4.500-4-3-3 .5-4-4-3 .5z" fill="#8d8d8d"/><g stroke="#d0d0d0" stroke-width="1.100"><path d="M2 14L16 0M6 16L21 1M10 18L23 5M14 21l9-9M18 22l5-5"/></g><g stroke="#4a4a4a" stroke-width="1"><path d="M4 15L18.500 .5M8 17L23 2.500M12 19.500l11-11"/></g></g>
<g transform="translate(1308,100)"><path d="M0 0h24v6L8 24H2L0 14z" fill="#1c1c1c"/><g stroke="#f0f0f0" stroke-width="1.500"><path d="M0 5l12-4M0 10l16-7M2 16L20 1M4 22L14 8M9 23l8-18M15 20l4-17M21 16l2-13"/></g><path d="M10 24l14-16v16z" fill="#f0f0f0"/><path d="M14 22l4-8M19 20l3-7" stroke="#222" stroke-width="2"/></g>
<g transform="translate(1342,101)"><path d="M0.500 10L12 0.500l11.500 9L12 21z" fill="#fff" stroke="#333" stroke-width="1.200"/><path d="M0.500 10l11.500 3 11.500-3.500M12 13v8" fill="none" stroke="#555" stroke-width=".9"/><path d="M6 12l7-6 6 5-3 0v6l-4-1v-5.500z" fill="#f0f0f0" stroke="#333" stroke-width="1"/><path d="M12 0.500l0 5.500" stroke="#999" stroke-width=".8"/></g>
<g transform="translate(1389,100)"><ellipse cx="6" cy="6.500" rx="5" ry="6" fill="#1e1e1e"/><ellipse cx="15" cy="7" rx="5.500" ry="6.500" fill="#1e1e1e"/><ellipse cx="7" cy="6.500" rx="2" ry="3.200" fill="#d8d8d8"/><ellipse cx="16.500" cy="7" rx="2.200" ry="3.500" fill="#d8d8d8"/><path d="M5 12h12l3 3v5l-3 2H6l-2-3z" fill="#1e1e1e"/><ellipse cx="19" cy="18" rx="3.200" ry="3.800" fill="#777" stroke="#1e1e1e" stroke-width="1.200"/><path d="M9 14h4v4H9z" fill="#d8d8d8" opacity=".7"/><circle cx="3.500" cy="18.500" r="3.700" fill="#fff" stroke="#111" stroke-width="1"/><path d="M3.500 16.200v4.600M1.200 18.500h4.600" stroke="#111" stroke-width="1.300"/></g>
<g transform="translate(1433.3,111.7)"><circle r="9.800" fill="#bdbdbd" stroke="#a6a6a6" stroke-width="1"/><path d="M-6 -2c3-3 9-3 12 0M-4 0c2 2 6 2 8 0" fill="none" stroke="#999" stroke-width="1.300"/><circle cx="0" cy="-.5" r="1.800" fill="#999"/><path d="M-7 4c3 2 10 3 14 0M-5 7c3 1 7 1 10 0" stroke="#ccc" stroke-width=".8" fill="none"/></g>
<g transform="translate(1456,100)"><ellipse cx="6" cy="6.500" rx="5" ry="6" fill="#a2a2a2"/><ellipse cx="15" cy="7" rx="5.500" ry="6.500" fill="#a2a2a2"/><ellipse cx="7" cy="6.500" rx="2" ry="3.200" fill="#e6e6e6"/><ellipse cx="16.500" cy="7" rx="2.200" ry="3.500" fill="#e6e6e6"/><path d="M5 12h12l3 3v5l-3 2H6l-2-3z" fill="#a2a2a2"/><ellipse cx="19" cy="18" rx="3.200" ry="3.800" fill="#c8c8c8" stroke="#a2a2a2" stroke-width="1.200"/><path d="M9 14h4v4H9z" fill="#e6e6e6" opacity=".7"/><path d="M1 15h5v8H1z" fill="#9a9a9a"/><circle cx="3.500" cy="13.500" r="1.800" fill="#9a9a9a"/><path d="M0 17h2" stroke="#9a9a9a"/></g>
<g transform="translate(1490,100)"><ellipse cx="6" cy="6.500" rx="5" ry="6" fill="#9c9c9c"/><ellipse cx="15" cy="7" rx="5.500" ry="6.500" fill="#9c9c9c"/><ellipse cx="7" cy="6.500" rx="2" ry="3.200" fill="#e6e6e6"/><ellipse cx="16.500" cy="7" rx="2.200" ry="3.500" fill="#e6e6e6"/><path d="M5 12h12l3 3v5l-3 2H6l-2-3z" fill="#9c9c9c"/><ellipse cx="19" cy="18" rx="3.200" ry="3.800" fill="#c8c8c8" stroke="#9c9c9c" stroke-width="1.200"/><path d="M9 14h4v4H9z" fill="#e6e6e6" opacity=".7"/><path d="M-3 16l8-2" stroke="#8a8a8a" stroke-width="1.800"/></g>
<g transform="translate(1524,102)"><path d="M1 4l19-1-3 17-14-6zM1 4l16 16M20 3L3 14" fill="none" stroke="#b0b0b0" stroke-width="1.200"/><path d="M20 3l1.500-3.500 2 .5-1 4z" fill="#a6a6a6"/></g>
<g transform="translate(1558,102)"><path d="M1 4l19-1-3 17-14-6z" fill="#b4b4b4" stroke="#a4a4a4" stroke-width="1"/><path d="M1 4l16 16M20 3L3 14" fill="none" stroke="#9a9a9a" stroke-width=".9"/><path d="M3 14l8-5 6 11z" fill="#a8a8a8"/><path d="M20 3l1.500-3.500 2 .5-1 4z" fill="#a0a0a0"/></g>
</svg>
<!-- left toolbar -->
<div class="a" style="left:0;top:132px;width:62px;height:760px;background:#f0f0f0"></div>
<div class="a" style="left:59px;top:132px;width:3px;height:760px;background:#f8f8f8"></div>
<div class="a" style="left:0;top:173px;width:58px;height:3px;background-image:radial-gradient(circle at 1px 1px,#b4b4b4 0.9px,transparent 1.200px);background-size:4px 3px"></div>
<div class="a" style="left:0;top:249px;width:57px;height:1px;background:#8f8f8f"></div>
<div class="a" style="left:0;top:427px;width:57px;height:1px;background:#8f8f8f"></div>
<div class="a" style="left:0;top:537px;width:57px;height:1px;background:#8f8f8f"></div>
<div class="a" style="left:0;top:647px;width:57px;height:1px;background:#8f8f8f"></div>
<div class="a" style="left:0;top:757px;width:57px;height:1px;background:#8f8f8f"></div>
<div class="a" style="left:0;top:832px;width:60px;height:1px;background:#c8c8c8"></div>
<div class="a" style="left:0;top:833px;width:60px;height:1px;background:#fbfbfb"></div>
<div class="a" style="left:25px;top:214px;width:34px;height:32px;box-sizing:border-box;border:1px solid #6e6e6e;border-radius:4px;background:linear-gradient(#f0f0f0,#dcdcdc)"></div>
<svg style="left:0;top:0" width="62" height="963" viewBox="0 0 62 963" font-family="Liberation Sans, sans-serif">
<g transform="translate(4,188)"><path d="M0 0v14l3.500-3 2.500 5.500 2.200-1-2.500-5.500h4.500z" fill="#000"/></g>
<g transform="translate(31,185)"><path d="M1 5l12-4 9 4-3 11-8 5-7-7z" fill="#e8e8e8" stroke="#b0b0b0" stroke-width="1.200"/><path d="M1 5l10 4 11-4M11 9v12M4 14l7-3 8 4M6 3l9 4M13 1l-7 5" fill="none" stroke="#b0b0b0" stroke-width="1"/><path d="M8 11l2 1v3l-2-1zM14 12l2-1v3l-2 1z" fill="#c0c0c0"/></g>
<g transform="translate(-2,219)"><path d="M3 8c2-5 10-7 15-3 3 3 3 9 1 13-3 3-10 3-14 0z" fill="#a8ad7e" stroke="#222" stroke-width="1.400"/><path d="M6 6c3-2 8-2 11 1l-2 5-8 1z" fill="#444"/><path d="M1 8l9-1 -2 7-7 2z" fill="#e8d020" stroke="#6a5a08" stroke-width=".7"/><path d="M10 12l7-2 1 7-6 2z" fill="#d8dcc0" stroke="#333" stroke-width=".8"/><path d="M13 3c4-3 8 1 6 5" fill="none" stroke="#222" stroke-width="1.300"/></g>
<g transform="translate(31,220)"><path d="M1 12L13 1l10 4-1 4-12 12-9-4z" fill="#f28aa0" stroke="#5a2a34" stroke-width="1.100"/><path d="M1 12l9 4L23 5" fill="none" stroke="#5a2a34" stroke-width="1"/><path d="M1 12L13 1l10 4-13 11z" fill="#f8a8b8"/><path d="M13 1l10 4-13 11-9-4z" fill="none" stroke="#5a2a34" stroke-width="1"/><path d="M1 13.500v3.500l9 4v-4z" fill="#f46a88"/><path d="M11 9l5-4.500M13 10l4-3.500" stroke="#c84a68" stroke-width="1"/></g>
<g transform="translate(-1,262)"><path d="M0 19L15 4l4-3 1 4-3 3L3 22l-3 0z" fill="#b8141e" stroke="#4a0a10" stroke-width=".9"/><path d="M0 19l3 3-4 1z" fill="#e8c890"/><path d="M15 4l3 3" stroke="#eee" stroke-width="1.500"/></g>
<g transform="translate(30,259)"><path d="M2 23c-1-6 4-9 8-6s6 4 7 0-5-7-9-6-5-5-1-8 9 2 12 0 3-4 2-1" fill="none" stroke="#b01622" stroke-width="2.200" stroke-linecap="round"/><circle cx="2" cy="23" r="1.800" fill="#b01622"/><circle cx="21" cy="2" r="1.800" fill="#b01622"/></g>
<g transform="translate(-4,295)"><rect x="0.500" y="1" width="20" height="19.500" fill="#9a998a" stroke="#333" stroke-width="1.200"/><path d="M1 20.500L20.500 1" stroke="#d8141e" stroke-width="2.800"/><path d="M1 20.500L20.500 1" stroke="#f6d8d8" stroke-width="1"/><circle cx="20" cy="1.500" r="1.600" fill="#b01622"/></g>
<g transform="translate(32,295)"><rect x="1.500" y="1" width="16.500" height="19.500" fill="#9a998a" stroke="#d8141e" stroke-width="1"/><path d="M1.500 5c9 0 15 5 16.500 11" fill="none" stroke="#d8141e" stroke-width="2.600"/><path d="M1.500 5c9 0 15 5 16.500 11" fill="none" stroke="#f6d8d8" stroke-width="1"/><circle cx="1.500" cy="1" r="1.600" fill="#b01622"/><circle cx="1.500" cy="5.500" r="1.600" fill="#b01622"/><circle cx="1.500" cy="20.500" r="1.600" fill="#b01622"/><circle cx="18" cy="20.500" r="1.600" fill="#b01622"/><circle cx="18" cy="15" r="1.600" fill="#b01622"/></g>
<g transform="translate(7.5,340)"><circle r="10.500" fill="#9a998a" stroke="#444" stroke-width="1.100"/><path d="M0 0L8.500 -7.500" stroke="#d8141e" stroke-width="2.600"/><path d="M0 0L8.500 -7.500" stroke="#f6d8d8" stroke-width="1"/><circle r="1.700" fill="#f6d8d8" stroke="#d8141e" stroke-width=".8"/><circle cx="8.500" cy="-7.500" r="1.500" fill="#b01622"/></g>
<g transform="translate(41.5,340)"><circle r="10.700" fill="none" stroke="#d8141e" stroke-width="1"/><path d="M-2 -10L8.500 -6.500 9 5.500 -2 10.500 -10 1z" fill="#9a998a" stroke="#444" stroke-width="1.100"/><path d="M0 0L8.500 -6.500" stroke="#d8141e" stroke-width="2.600"/><path d="M0 0L8.500 -6.500" stroke="#f6d8d8" stroke-width="1"/><circle r="1.700" fill="#f6d8d8" stroke="#d8141e" stroke-width=".8"/><circle cx="8.500" cy="-6.500" r="1.500" fill="#b01622"/></g>
<g transform="translate(-2,362)"><path d="M1 3h19.500L1 21" fill="none" stroke="#d8141e" stroke-width="2.600"/><path d="M1 3h19.500L1 21" fill="none" stroke="#f6d8d8" stroke-width="1"/><path d="M20.500 3c0 10-8 18-19.500 18" fill="none" stroke="#333" stroke-width="1.300"/><circle cx="20.500" cy="3" r="2" fill="#b01622"/></g>
<g transform="translate(31,362)"><path d="M5 22.500C-3 14 1 2 14 1c3 0 6 1 8 3" fill="none" stroke="#222" stroke-width="1.400"/><path d="M5 22.500L22 4.500M4.500 4.500L13 14" stroke="#d8141e" stroke-width="1.300"/><circle cx="4.500" cy="4.500" r="1.900" fill="#b01622"/><circle cx="22" cy="4.500" r="1.900" fill="#b01622"/><circle cx="5.500" cy="22" r="1.900" fill="#b01622"/></g>
<g transform="translate(-1,398)"><circle cx="10.500" cy="11" r="10" fill="none" stroke="#333" stroke-width="1.200"/><path d="M6.500 1.500L17.500 19 0 14" fill="none" stroke="#d8141e" stroke-width="1.300"/><circle cx="6.500" cy="1.500" r="1.800" fill="#b01622"/><circle cx="17.500" cy="19" r="1.800" fill="#b01622"/><circle cx="1" cy="14" r="1.800" fill="#b01622"/></g>
<g transform="translate(32,398)"><path d="M1 2h19c0 10-8 17.500-19 18z" fill="#9a998a" stroke="#444" stroke-width="1"/><path d="M1 2h19L1 20z" fill="none" stroke="#d8141e" stroke-width="1.100"/><path d="M1 20L20 2" stroke="#d8141e" stroke-width="2.600"/><path d="M1 20L20 2" stroke="#f6d8d8" stroke-width="1"/><circle cx="1" cy="2" r="1.600" fill="#b01622"/><circle cx="20" cy="2" r="1.600" fill="#b01622"/><circle cx="1" cy="20" r="1.600" fill="#b01622"/></g>
<g transform="translate(8,450)"><g transform="rotate(0)"><path d="M0 -11.500l5 6h-3v3.500h-4v-3.500h-3z" fill="#d8141e"/></g><g transform="rotate(90)"><path d="M0 -11.500l5 6h-3v3.500h-4v-3.500h-3z" fill="#d8141e"/></g><g transform="rotate(180)"><path d="M0 -11.500l5 6h-3v3.500h-4v-3.500h-3z" fill="#d8141e"/></g><g transform="rotate(270)"><path d="M0 -11.500l5 6h-3v3.500h-4v-3.500h-3z" fill="#d8141e"/></g><path d="M-2 -2h4v4h-4z" fill="#f6d0d0"/></g>
<g transform="translate(30,439)"><path d="M0 11L13 6l11 5v3l-13 7.500L0 14z" fill="#8d8c7e" stroke="#222" stroke-width="1"/><path d="M0 11l11 5 13-5M11 16v5.500" fill="none" stroke="#222" stroke-width="1"/><path d="M0 11L13 6l11 5-13 5z" fill="#a8a798"/><path d="M12 0l5 7h-3v6l-2 1.500-2-1.500V7H7z" fill="#d8141e" stroke="#7a0c12" stroke-width=".6"/><path d="M11 7v6" stroke="#ff9a9a" stroke-width="1.200"/></g>
<g transform="translate(-2,474)"><path d="M2 9C3 2 14 0 18 5l2-2 1 8-8-1 2-2c-3-3-8-2-9 2z" fill="#d8141e" stroke="#8a0c12" stroke-width=".6"/><path d="M20 12c-1 7-12 9-16 4l-2 2-1-8 8 1-2 2c3 3 8 2 9-2z" fill="#d8141e" stroke="#8a0c12" stroke-width=".6"/></g>
<g transform="translate(30,473)"><path d="M2 12C2 4 10 0 18 2c4 1 6 4 5 8l-4 1c0-3-2-5-5-5-5 0-8 4-7 9l-2 6z" fill="#5a5a52" stroke="#222" stroke-width="1"/><path d="M2 12l3 9 2-6z" fill="#8d8c7e" stroke="#222" stroke-width=".8"/><path d="M5 11c1-5 6-8 12-6l1 4c-4-1-8 1-8 5l3 1 4-3-1 5-6 1.500L6 14z" fill="#b01622"/><path d="M12 13l5-2.500L16 17z" fill="#d8141e"/></g>
<g transform="translate(-3,506)"><rect x="0" y="1.500" width="23" height="22" fill="#fdfdfd" stroke="#d89aa0" stroke-width="1"/><rect x="0" y="8" width="17" height="15.500" fill="#9a998a" stroke="#333" stroke-width="1.200"/><path d="M23.500 0l-2 9-2.500-2-6 6-4-4 6-6-2.500-2.500z" fill="#d8141e" stroke="#7a0c12" stroke-width=".6"/></g>
<g transform="translate(30,506)"><path d="M1 3C12 -2 24 6 22 22" fill="none" stroke="#d8141e" stroke-width="1.600"/><path d="M4 13c1-5 5-7 9-6M14 22c3-2 4-5 3.500-9" fill="none" stroke="#2a4a5a" stroke-width="1.400"/><path d="M21 1l-2 9-2.500-2-4 5-4.500-3.500 4-5-3-2.500z" fill="#d8141e" stroke="#7a0c12" stroke-width=".6"/></g>
<g transform="translate(-2,549)"><path d="M0 20l8-7 2 2.500-8 7z" fill="#e8d820" stroke="#222" stroke-width="1"/><path d="M8 6c2-5 10-7 13-3 1 4-3 10-9 11-3-1-5-4-4-8z" fill="#4a4a3a" stroke="#111" stroke-width="1.100"/><ellipse cx="15" cy="8" rx="4.200" ry="3.600" transform="rotate(-30 15 8)" fill="#d8d020" stroke="#333" stroke-width=".8"/></g>
<g transform="translate(31,549)"><path d="M3 12L13 2M5 14L15 4" stroke="#111" stroke-width="1" fill="none"/><path d="M1.500 10.500l10 10M11.500 0.500l10 10" stroke="#111" stroke-width="1"/><path d="M0 13l6 0M-0 9l6 6M10 3l6 0M10 -1l6 6" stroke="#111" stroke-width="1.200"/><circle cx="11.500" cy="20.500" r="1.200" fill="#8a8"/><circle cx="21.500" cy="10.500" r="1.200" fill="#8a8"/><text x="2" y="7" font-size="8" fill="#111" transform="rotate(-45 4 5)">3</text></g>
<g transform="translate(-2,583)"><path d="M1 15C4 6 10 2 21 1L7 20z" fill="#e8d820" stroke="#3a3408" stroke-width="1.200"/><path d="M5 14c2-4 5-7 10-8L7 16z" fill="#f0f0f0" stroke="#3a3408" stroke-width="1"/><path d="M3 11l2 1M6 7l1.500 1.500M10 4l1 2M15 2l.5 2" stroke="#3a3408" stroke-width=".8"/></g>
<g transform="translate(33,583)"><rect x="5.500" y="0.500" width="15.500" height="14" fill="#fff" stroke="#222" stroke-width="1"/><text x="13.300" y="11.500" font-size="10" font-family="Liberation Serif, serif" font-weight="bold" text-anchor="middle" fill="#111">A1</text><path d="M5.500 7.500H1.500v10" fill="none" stroke="#111" stroke-width="1"/><path d="M-1 16.500h5L1.500 21.500z" fill="#111"/></g>
<g transform="translate(-1,616)"><path d="M7 12V22" stroke="#bcd" stroke-width="1.500"/><path d="M7 12L0 16" stroke="#9c9" stroke-width="1.200"/><path d="M7 12L0 9" stroke="#e99" stroke-width="1.200"/><path d="M7 12V4" stroke="#1a4ab8" stroke-width="2"/><path d="M7 0l3 6H4z" fill="#1a4ab8"/><path d="M7 12l7-4" stroke="#2a9a3a" stroke-width="1.600"/><path d="M17 6l-5 .5 2 3z" fill="#2a9a3a"/><path d="M7 12l7 5" stroke="#d8141e" stroke-width="1.600"/><path d="M17 19l-2-4.500-2.500 3z" fill="#d8141e"/><circle cx="7" cy="12" r="1.600" fill="#111"/></g>
<g transform="translate(31,615)"><path d="M0 17L7 1h5l8 18-4 5-4-2-1-4-4-1-1 3z" fill="#4a4a3e" stroke="#1a1a14" stroke-width="1"/><path d="M7 1l-5 16 3 1M12 1l6 20" fill="none" stroke="#8d8c7e" stroke-width="1.300"/><path d="M7 12h5l-2-6z" fill="#f0f0f0"/><path d="M4 14l10 3" stroke="#8d8c7e" stroke-width="1.200"/></g>
<g transform="translate(-3,658)"><path d="M11 7c5-3 11-1 11 4 0 4-4 7-9 8l1-4c2-1 3-2 3-4s-3-3-6-1z" fill="#2a9a5a" stroke="#145a30" stroke-width=".7"/><path d="M13 15v6l4-3" fill="#2a9a5a"/><path d="M2 5c2-1 6-1 8 1v5c-3-2-6-2-8 0z" fill="#c04a4a"/><path d="M0 14l9-2v3l6 1-1 5-5-1v3z" fill="#d8141e" stroke="#7a0c12" stroke-width=".6"/><path d="M11 0v24" stroke="#111" stroke-width="1.800"/></g>
<g transform="translate(31,659)"><path d="M1 16l5-10 4-4 2 .5-2 5 6-6 2 1-4 6 6-5 1.500 1.500-5 6 5-3 1 1.500-6 6-2 5-7 1-4-3z" fill="#f2e0b4" stroke="#8a7a5a" stroke-width=".9"/></g>
<g transform="translate(0,0)"><path d="M7.6 703.7L0 711.5" stroke="#222" stroke-width="3.200" stroke-linecap="round"/><circle cx="11.6" cy="699.7" r="6.3" fill="#8ab0dc" stroke="#1a2a4a" stroke-width="1.500"/><path d="M8.1 698.7a4 4 0 0 1 4-3.500" fill="none" stroke="#c8dcf4" stroke-width="1.300"/></g>
<g transform="translate(0,0)"><rect x="32.500" y="694.500" width="21" height="20.500" fill="#f4f4f4" stroke="#d8141e" stroke-width="1.500"/><path d="M41 703.7L33.5 712.5" stroke="#222" stroke-width="3.200" stroke-linecap="round"/><circle cx="45" cy="699.7" r="6.3" fill="#8ab0dc" stroke="#1a2a4a" stroke-width="1.500"/><path d="M41.5 698.7a4 4 0 0 1 4-3.500" fill="none" stroke="#c8dcf4" stroke-width="1.300"/></g>
<g transform="translate(0,0)"><path d="M4.4 741L-1 746" stroke="#222" stroke-width="3.200" stroke-linecap="round"/><circle cx="8.4" cy="737" r="5" fill="#8ab0dc" stroke="#1a2a4a" stroke-width="1.500"/><path d="M4.9 736a4 4 0 0 1 4-3.500" fill="none" stroke="#c8dcf4" stroke-width="1.300"/><g transform="translate(20,726)"><path d="M0 0l-6 1.500 1.800 1.300-2.800 3 2 2 3-2.800 1.300 1.800z" fill="#d8141e"/></g><g transform="translate(20,749) scale(1,-1)"><path d="M0 0l-6 1.500 1.800 1.300-2.800 3 2 2 3-2.800 1.300 1.800z" fill="#d8141e"/></g><g transform="translate(-2,726) scale(-1,1)"><path d="M0 0l-6 1.500 1.800 1.300-2.800 3 2 2 3-2.800 1.300 1.800z" fill="#d8141e"/></g></g>
<g transform="translate(31,726)"><path d="M1 8L9 1v4c7-1 13 2 13 9-2-3-6-4-13-3.500v4.500z" fill="#1e8ff0" stroke="#0d4f9e" stroke-width=".9"/><path d="M1 8c0 5 4 8 9 8" fill="none" stroke="#0d4f9e" stroke-width="1.300"/><circle cx="7" cy="9" r="5" fill="#8ab0dc" stroke="#1a3a6a" stroke-width="1.200" opacity=".85"/><path d="M12 13l9 9" stroke="#1a2a3a" stroke-width="3.600" stroke-linecap="round"/></g>
<g transform="translate(3,769)"><path d="M2 19l8 4M10 19l-8 4" stroke="#d8141e" stroke-width="1"/><circle cx="5.500" cy="2.200" r="1.800" fill="#fff" stroke="#111" stroke-width=".9"/><path d="M3.500 5h4l2 6-1 1-1-3 .5 11h-2l-.5-6-.5 6h-2l.5-11-1 3-1-1z" fill="#fff" stroke="#111" stroke-width=".9"/></g>
<g transform="translate(31,771)"><path d="M1 8C5 2 15 0 22 6" fill="none" stroke="#222" stroke-width="2"/><path d="M2 10c4-5 14-6 20-1-4 5-14 7-20 1z" fill="#fff" stroke="#333" stroke-width="1"/><circle cx="11" cy="9" r="4.200" fill="#111"/><circle cx="12.500" cy="7.500" r="1.200" fill="#fff"/><path d="M3 13c5 4 13 4 19-1M6 16c4 2 9 2 13 0" fill="none" stroke="#bbb" stroke-width="1"/></g>
<g transform="translate(-2,804)"><path d="M1 4c2-4 7-3 7 1l-1 8c0 3-1 6-4 6-3 0-3-3-3-6z" fill="#111"/><path d="M15 2c3-3 7 0 6 4l-3 9c-1 3-3 5-6 4-3-1-2-4-1-7z" fill="#111"/><path d="M1 13l6 1M11 12l6 2" stroke="#bbb" stroke-width="1.500"/></g>
<g transform="translate(32,804)"><path d="M9 0l11 10-11 10.500v-5" fill="none" stroke="#111" stroke-width="1.600"/><path d="M9 0v5" stroke="#111" stroke-width="1.600"/><path d="M20 10l-9-9v18z" fill="#111"/><circle cx="10" cy="10" r="7" fill="#fff" stroke="#111" stroke-width="1.300"/><path d="M0 10h18" stroke="#555" stroke-width="1.300"/></g>
</svg>
<!-- viewport -->
<div class="a" style="left:62px;top:131px;width:1237px;height:761px;background:#d4d8d4"></div><div class="a" style="left:62px;top:131px;width:1236px;height:2px;background:#5f7890"></div><div class="a" style="left:61px;top:132px;width:2px;height:760px;background:#6a8096"></div>
<div class="a" style="left:63px;top:133px;width:1235px;height:109px;background:linear-gradient(#7ecafb,#a5dafc 45%,#d9effd)"></div>
<div class="a" style="left:63px;top:242px;width:1235px;height:649px;background:#9bbb91"></div>
<svg class="a" style="left:0;top:0" width="1589" height="963" viewBox="0 0 1589 963">
<line x1="63" y1="347.5" x2="710" y2="241.8" stroke="#1fa31f" stroke-width="1"/>
<line x1="63" y1="858.5" x2="1298" y2="874" stroke="#a8321c" stroke-width="1"/>
<circle cx="768.5" cy="310.5" r="43.8" fill="#c2d1dc" stroke="#0a0a0a" stroke-width="1.400"/>
<polygon points="544.6,551.3 544.6,568.3 560.3,583.9 593.8,598.2 642.9,609.4 700.9,617.4 763.4,621.9 812.5,620.5 857.1,616.5 904.0,611.2 950.9,600.9 981.2,587.0 992.0,571.4 985.7,554.9 968.8,541.5 935.3,528.1 892.9,518.3 848.2,511.6 803.6,508.0 761.2,506.7 732.1,507.1 696.4,509.4 656.2,513.4 618.3,518.3 582.6,527.2 560.3,537.9" fill="#5f666e" stroke="#111" stroke-width="1.6" stroke-linejoin="round"/>
</svg>
<!-- tray -->
<div class="a" style="left:1299px;top:131px;width:290px;height:763px;background:#f0f0f0"></div>
<div class="a" style="left:1304px;top:132px;width:285px;height:18px;background:linear-gradient(#c3d3e7,#d3dfee 50%,#e3ebf5)"></div>
<div class="t" style="left:1308px;top:136px;font-size:11.5px;color:#3c4a5e;letter-spacing:.1px">Default Tray</div>
<svg style="left:1555px;top:135px" width="10" height="12" viewBox="0 0 10 12"><path d="M3 1h4v5h1.5v1H1.500v-1H3zM4 2v4h1V2z" fill="#000" fill-rule="evenodd"/><path d="M5 7v4" stroke="#000" stroke-width="1.2"/></svg>
<div class="a" style="left:1572px;top:134px;width:13px;height:13px;box-sizing:border-box;border:1px solid #7a2b24;border-radius:2px;background:linear-gradient(#e9a79c,#d0574a 50%,#c2402f)"></div>
<svg style="left:1572px;top:134px" width="13" height="13" viewBox="0 0 13 13"><path d="M3.7 3.7l5.600 5.600M9.300 3.700l-5.600 5.600" stroke="#fff" stroke-width="1.9"/></svg>
<div class="hdr" style="top:150px"><i class="d"></i><div class="t">Materials</div><div class="xb">×</div></div>
<div class="a" style="left:1572px;top:150px;width:17px;height:744px;background:#f1f1f1"></div>
<svg style="left:1576px;top:157px" width="9" height="6" viewBox="0 0 9 6"><path d="M0.500 5.500L4.500 1l4 4.500z" fill="#4a4a4a"/></svg>
<div class="a" style="left:1573px;top:169px;width:15px;height:15px;box-sizing:border-box;border:1px solid #9c9c9c;border-radius:2px;background:linear-gradient(90deg,#f6f6f6,#dcdcdc)"></div>
<svg style="left:1577px;top:883px" width="8" height="5" viewBox="0 0 8 5"><path d="M0.500 0.500h7L4 4.500z" fill="#333"/></svg>
<div class="a" style="left:1305px;top:169px;width:67px;height:72px;box-sizing:border-box;border:1px solid #a8a8a8;background:#fff"></div>
<svg style="left:1306px;top:170px" width="65" height="70" viewBox="0 0 65 70"><rect width="65" height="70" fill="#fff"/><path d="M1 2L64 66H1z" fill="#9dacba"/><rect x="0" y="67" width="65" height="3" fill="#f0f0f0"/><path d="M0 66.500h65" stroke="#a8a8a8"/></svg>
<div class="a" style="left:1375px;top:170px;width:168px;height:19px;box-sizing:border-box;border:1px solid #e3e3e3;border-top:2px solid #9a9a9a;border-left:2px solid #9a9a9a;background:#f0f0f0"></div>
<div class="t" style="left:1380px;top:174.5px;font-size:11px;color:#8a8a8a;letter-spacing:.3px">Default</div>
<svg style="left:1552px;top:171px" width="14" height="18" viewBox="0 0 14 18"><rect x="1" y="1" width="11" height="7" fill="#fff" stroke="#222" stroke-width="0"/><rect x="1" y="0.500" width="11" height="7.500" fill="#f8f8f8"/><path d="M3 3h7l-3.500 4z" fill="#000"/><rect x="1" y="9" width="11" height="8" fill="#000"/><path d="M6.500 10.500v5M4 13h5" stroke="#fff" stroke-width="1.600"/></svg>
<svg style="left:1548px;top:194px" width="20" height="22" viewBox="0 0 20 22"><path d="M4 5l8-3.500 6 3v8l-7 5-7-4z" fill="#3b3a33" stroke="#111" stroke-width="1"/><path d="M5 5.500l7-3 5 2.500-7 3.500z" fill="#b5b08f"/><path d="M6 8.500l5 2.500 6-3.500" stroke="#e8e4c8" stroke-width="1.500" fill="none"/><circle cx="5.500" cy="16" r="4.800" fill="#fff" stroke="#111" stroke-width="1.300"/><path d="M5.500 13.300v5.400M2.800 16h5.400" stroke="#111" stroke-width="1.300"/></svg>
<svg style="left:1548px;top:219px" width="22" height="22" viewBox="0 0 22 22"><rect width="22" height="22" fill="#fff"/><path d="M0 1L21 22H0z" fill="#9dacba"/></svg>
<div class="a" style="left:1304px;top:243px;width:268px;height:1px;background:#a9a9a9"></div>
<div class="a" style="left:1304px;top:244px;width:268px;height:1px;background:#fbfbfb"></div>
<div class="t" style="left:1310px;top:253px;font-size:11px">Select</div>
<div class="t" style="left:1352px;top:255px;font-size:11px">Edit</div>
<div class="a" style="left:1347px;top:250px;width:2px;height:19px;background:#9a9a9a"></div>
<div class="a" style="left:1387px;top:252px;width:2px;height:17px;background:#9a9a9a"></div>
<div class="a" style="left:1349px;top:252px;width:38px;height:1px;background:#e2e2e2"></div>
<div class="a" style="left:1304px;top:269px;width:43px;height:1px;background:#f7f7f7"></div>
<div class="a" style="left:1348px;top:269px;width:224px;height:1px;background:#dedede"></div>
<svg style="left:1550px;top:247px" width="18" height="18" viewBox="0 0 18 18"><path d="M1.500 16.500l1-3 7-7 2 2-7 7z" fill="#e6c04a" stroke="#5a4a10" stroke-width=".8"/><path d="M9 5l3.500-3.500a2 2 0 0 1 3 3L12 8l1 1-1.500 1.500L7.500 6.500 9 5z" fill="#333"/></svg>
<svg style="left:1311px;top:279px" width="16" height="14" viewBox="0 0 16 14"><path d="M1 7l6-5.500v3.500h6v4H7v3.500z" fill="#f6f6f6" stroke="#a2a2a2" stroke-width="1.200"/></svg>
<svg style="left:1334px;top:279px" width="16" height="14" viewBox="0 0 16 14"><path d="M15 7L9 1.500v3.500H3v4h6v3.500z" fill="#f6f6f6" stroke="#a2a2a2" stroke-width="1.200"/></svg>
<svg style="left:1357px;top:277px" width="18" height="18" viewBox="0 0 18 18"><path d="M1.500 9L9 1.500 16.500 9" fill="none" stroke="#000" stroke-width="1.700"/><path d="M3.500 8v8h11V8L9 2.800z" fill="#fff" stroke="#000" stroke-width="1.400"/><rect x="7" y="10" width="4" height="6" fill="#000"/></svg>
<div class="a" style="left:1379px;top:277px;width:166px;height:23px;box-sizing:border-box;border:1px solid #e8e8e8;border-top:2px solid #8e8e8e;border-left:2px solid #8e8e8e;background:#fff"></div>
<div class="t" style="left:1383px;top:283px;font-size:11px">Asphalt and Concrete</div>
<div class="a" style="left:1527px;top:280px;width:16px;height:18px;box-sizing:border-box;border:1px solid #f8f8f8;border-right:1.500px solid #8a8a8a;border-bottom:1.500px solid #8a8a8a;background:#ececec"></div>
<svg style="left:1531px;top:287px" width="8" height="5" viewBox="0 0 8 5"><path d="M0 0h8L4 4.500z" fill="#000"/></svg>
<svg style="left:1553px;top:279px" width="15" height="16" viewBox="0 0 15 16"><path d="M5 1L14 8 5 15z" fill="#000"/><rect x="0.500" y="3.500" width="7" height="9" fill="#c8d8f4" stroke="#1c3b8a" stroke-width="1"/><path d="M2 6h4M2 8h4M2 10h4" stroke="#1c3b8a" stroke-width=".9"/></svg>
<div class="a" style="left:1304px;top:301px;width:268px;height:246px;background:#fff;border-top:1px solid #b4b4b4;box-sizing:border-box"></div>
<div class="a" style="left:1307px;top:304px;width:49px;height:49px;box-sizing:border-box;border:1px solid #aaa;background:#fff"><div class="a" style="left:1px;top:1px;width:45px;height:45px;background:#3f3a3e"></div></div>
<div class="a" style="left:1359px;top:304px;width:49px;height:49px;box-sizing:border-box;border:1px solid #aaa;background:#fff"><div class="a" style="left:1px;top:1px;width:45px;height:45px;background:#1d1d1f"></div></div>
<div class="a" style="left:1411px;top:304px;width:49px;height:49px;box-sizing:border-box;border:1px solid #aaa;background:#fff"><div class="a" style="left:1px;top:1px;width:45px;height:45px;background:#84888c"></div></div>
<div class="a" style="left:1463px;top:304px;width:49px;height:49px;box-sizing:border-box;border:1px solid #aaa;background:#fff"><div class="a" style="left:1px;top:1px;width:45px;height:45px;background:#8e8f91"></div></div>
<div class="a" style="left:1515px;top:304px;width:49px;height:49px;box-sizing:border-box;border:1px solid #aaa;background:#fff"><div class="a" style="left:1px;top:1px;width:45px;height:45px;background:#a19c9d"></div></div>
<div class="a" style="left:1307px;top:356px;width:49px;height:49px;box-sizing:border-box;border:1px solid #aaa;background:#fff"><div class="a" style="left:1px;top:1px;width:45px;height:45px;background:#b2b5b4"></div></div>
<div class="a" style="left:1359px;top:356px;width:49px;height:49px;box-sizing:border-box;border:1px solid #aaa;background:#fff"><div class="a" style="left:1px;top:1px;width:45px;height:45px;background:#8d8681;background-image:repeating-linear-gradient(90deg,#a49d97 0,#a49d97 1.500px,#6f6964 1.500px,#6f6964 3px,#948d88 3px,#948d88 4px)"></div></div>
<div class="a" style="left:1411px;top:356px;width:49px;height:49px;box-sizing:border-box;border:1px solid #aaa;background:#fff"><div class="a" style="left:1px;top:1px;width:45px;height:45px;background:#c8c9cb"></div></div>
<div class="a" style="left:1463px;top:356px;width:49px;height:49px;box-sizing:border-box;border:1px solid #aaa;background:#fff"><div class="a" style="left:1px;top:1px;width:45px;height:45px;background:#e8e8e8"></div></div>
<svg style="left:1304px;top:301px" width="268" height="110" viewBox="0 0 268 110"><defs><filter id="nz" x="0" y="0" width="100%" height="100%"><feTurbulence type="fractalNoise" baseFrequency="0.9" numOctaves="2" seed="3"/><feColorMatrix type="matrix" values="0 0 0 0 0.5  0 0 0 0 0.5  0 0 0 0 0.5  1.4 0 0 0 -0.45"/></filter><filter id="nz2" x="0" y="0" width="100%" height="100%"><feTurbulence type="fractalNoise" baseFrequency="0.9" numOctaves="2" seed="8"/><feColorMatrix type="matrix" values="0 0 0 0 1  0 0 0 0 1  0 0 0 0 1  1.4 0 0 0 -0.5"/></filter></defs>
<g opacity=".35"><rect x="5" y="5" width="45" height="45" filter="url(#nz)"/><rect x="57" y="5" width="45" height="45" filter="url(#nz)"/><rect x="109" y="5" width="45" height="45" filter="url(#nz2)"/><rect x="161" y="5" width="45" height="45" filter="url(#nz2)"/><rect x="5" y="57" width="45" height="45" filter="url(#nz2)"/><rect x="109" y="57" width="45" height="45" filter="url(#nz2)"/><rect x="161" y="57" width="45" height="45" filter="url(#nz2)"/></g><g opacity=".8"><rect x="213" y="5" width="45" height="45" filter="url(#nz2)"/></g><g opacity=".3"><rect x="213" y="5" width="45" height="45" filter="url(#nz)"/></g>
<circle cx="12" cy="81" r=".9" fill="#8a8d8c"/><circle cx="43" cy="81" r=".9" fill="#8a8d8c"/><circle cx="12" cy="95" r=".9" fill="#8a8d8c"/><circle cx="43" cy="95" r=".9" fill="#8a8d8c"/></svg>
<div class="a" style="left:1304px;top:547px;width:268px;height:2px;background:#f0f0f0"></div>
<div class="a" style="left:1304px;top:549px;width:268px;height:2px;background:#8f8f8f"></div>
<div class="hdr" style="top:552px"><i class="r"></i><div class="t">Components</div><div class="xb">×</div></div>
<div class="hdr" style="top:571px"><i class="r"></i><div class="t">Styles</div><div class="xb">×</div></div>
<div class="hdr" style="top:590px"><i class="r"></i><div class="t">Shadows</div><div class="xb">×</div></div>
<div class="hdr" style="top:609px"><i class="r"></i><div class="t">Instructor</div><div class="xb">×</div></div>
<div class="hdr" style="top:628px"><i class="r"></i><div class="t">Scenes</div><div class="xb">×</div></div>
<div class="hdr" style="top:647px"><i class="d"></i><div class="t">Layers</div><div class="xb">×</div></div>
<svg style="left:1310px;top:670px" width="17" height="17" viewBox="0 0 17 17"><circle cx="8.500" cy="8.500" r="6.800" fill="#fff" stroke="#000" stroke-width="1.500"/><path d="M8.500 4.500v8M4.500 8.500h8" stroke="#000" stroke-width="1.900"/></svg>
<svg style="left:1334px;top:670px" width="17" height="17" viewBox="0 0 17 17"><circle cx="8.500" cy="8.500" r="6.800" fill="#f6f6f6" stroke="#9a9a9a" stroke-width="1.300"/><path d="M4.500 8.500h8" stroke="#9a9a9a" stroke-width="1.600"/></svg>
<svg style="left:1553px;top:671px" width="15" height="16" viewBox="0 0 15 16"><path d="M5 1L14 8 5 15z" fill="#000"/><rect x="0.500" y="3.500" width="7" height="9" fill="#c8d8f4" stroke="#1c3b8a" stroke-width="1"/><path d="M2 6h4M2 8h4M2 10h4" stroke="#1c3b8a" stroke-width=".9"/></svg>
<div class="a" style="left:1304px;top:693px;width:268px;height:15px;box-sizing:border-box;background:#f3f3f3;border-top:1px solid #fdfdfd;border-bottom:2px solid #8c8c8c"></div>
<div class="a" style="left:1481px;top:692px;width:1.500px;height:15px;background:#8c8c8c"></div>
<div class="a" style="left:1531px;top:692px;width:1.500px;height:15px;background:#8c8c8c"></div>
<div class="a" style="left:1571px;top:692px;width:1.500px;height:15px;background:#8c8c8c"></div>
<div class="t" style="left:1309px;top:696px;font-size:11px">Name</div>
<svg style="left:1351px;top:697px" width="8" height="8" viewBox="0 0 8 8"><path d="M0.500 0.500h7L4 7z" fill="#fff" stroke="#aaa" stroke-width=".8"/></svg>
<div class="t" style="left:1488px;top:696px;font-size:11px;letter-spacing:-.2px">Visible</div>
<div class="t" style="left:1538px;top:696px;font-size:11px">Color</div>
<div class="a" style="left:1304px;top:708px;width:268px;height:186px;background:#fff"></div>
<svg style="left:1309px;top:714px" width="11" height="11" viewBox="0 0 11 11"><circle cx="5.500" cy="5.500" r="4.700" fill="#fff" stroke="#555" stroke-width="1"/><circle cx="5.500" cy="5.500" r="3.200" fill="#000"/></svg>
<div class="t" style="left:1323px;top:715px;font-size:11px">Layer0</div>
<div class="a" style="left:1502px;top:714px;width:11px;height:11px;box-sizing:border-box;border:1px solid #555;background:#fff"></div>
<svg style="left:1502px;top:714px" width="11" height="11" viewBox="0 0 11 11"><path d="M2.500 5.500l2 2.200 4-4.700" fill="none" stroke="#111" stroke-width="1.300"/></svg>
<div class="a" style="left:1544px;top:712px;width:15px;height:15px;background:#ef5252"></div>
<svg style="left:1309px;top:731px" width="11" height="11" viewBox="0 0 11 11"><circle cx="5.500" cy="5.500" r="4.700" fill="#fff" stroke="#555" stroke-width="1"/></svg>
<div class="t" style="left:1323px;top:732px;font-size:11px">Meble</div>
<div class="a" style="left:1502px;top:731px;width:11px;height:11px;box-sizing:border-box;border:1px solid #555;background:#fff"></div>
<svg style="left:1502px;top:731px" width="11" height="11" viewBox="0 0 11 11"><path d="M2.500 5.500l2 2.200 4-4.700" fill="none" stroke="#111" stroke-width="1.300"/></svg>
<div class="a" style="left:1544px;top:729px;width:15px;height:15px;background:#0a0ae0"></div>
<svg style="left:1309px;top:748px" width="11" height="11" viewBox="0 0 11 11"><circle cx="5.500" cy="5.500" r="4.700" fill="#fff" stroke="#555" stroke-width="1"/></svg>
<div class="t" style="left:1323px;top:749px;font-size:11px">Okna</div>
<div class="a" style="left:1502px;top:748px;width:11px;height:11px;box-sizing:border-box;border:1px solid #555;background:#fff"></div>
<svg style="left:1502px;top:748px" width="11" height="11" viewBox="0 0 11 11"><path d="M2.500 5.500l2 2.200 4-4.700" fill="none" stroke="#111" stroke-width="1.300"/></svg>
<div class="a" style="left:1544px;top:746px;width:15px;height:15px;background:#12f0f0"></div>
<svg style="left:1309px;top:765px" width="11" height="11" viewBox="0 0 11 11"><circle cx="5.500" cy="5.500" r="4.700" fill="#fff" stroke="#555" stroke-width="1"/></svg>
<div class="t" style="left:1323px;top:766px;font-size:11px">Sciany</div>
<div class="a" style="left:1502px;top:765px;width:11px;height:11px;box-sizing:border-box;border:1px solid #555;background:#fff"></div>
<svg style="left:1502px;top:765px" width="11" height="11" viewBox="0 0 11 11"><path d="M2.500 5.500l2 2.200 4-4.700" fill="none" stroke="#111" stroke-width="1.300"/></svg>
<div class="a" style="left:1544px;top:763px;width:15px;height:15px;background:#ffff14"></div>
<!-- bottom bars -->
<div class="a" style="left:0;top:892px;width:1299px;height:68px;background:#f0f0f0"></div><div class="a" style="left:1299px;top:894px;width:290px;height:66px;background:#f0f0f0"></div>
<div class="a" style="left:0;top:931px;width:400px;height:1px;background:#b5b5b5"></div>
<div class="a" style="left:285px;top:894px;width:1px;height:37px;background:#c4c4c4"></div>
<div class="a" style="left:399px;top:894px;width:1px;height:38px;background:#c4c4c4"></div>
<div class="grip" style="left:290px;top:898px;height:30px"></div>
<div class="t" style="left:4px;top:908px;font-size:11.4px;letter-spacing:-.1px">Measurements</div>
<div class="a" style="left:126px;top:903px;width:158px;height:20px;background:#efefef"></div>
<!-- measurement icons -->
<svg style="left:300px;top:900px" width="26" height="27" viewBox="0 0 26 27"><circle cx="13" cy="14" r="11" fill="#f6f6f6" stroke="#111" stroke-width="1.300"/><path d="M13 1v15M2 14h22" stroke="#111" stroke-width="1.300"/><circle cx="13" cy="19" r="3.600" fill="#111"/><text x="13" y="21" font-size="5" font-weight="bold" fill="#fff" text-anchor="middle" font-family="Liberation Sans, sans-serif">N</text></svg>
<svg style="left:334px;top:900px" width="26" height="27" viewBox="0 0 26 27"><path d="M1 18h24" stroke="#e03030" stroke-width="1"/><path d="M12 3v18" stroke="#2a8a2a" stroke-width="1"/><path d="M21 2l-8 15" stroke="#111" stroke-width="2.400"/><circle cx="12.500" cy="18" r="4.200" fill="#111"/><text x="12.500" y="20.200" font-size="6" font-weight="bold" font-style="italic" fill="#fff" text-anchor="middle" font-family="Liberation Sans, sans-serif">N</text></svg>
<svg style="left:368px;top:900px" width="26" height="27" viewBox="0 0 26 27"><circle cx="13" cy="13" r="10.500" fill="none" stroke="#999" stroke-width="1.200"/><path d="M13 2.500A10.500 10.500 0 0 1 23.500 13" fill="none" stroke="#d22" stroke-width="1.400"/><path d="M13 3v10h11" fill="none" stroke="#d22" stroke-width="1.300"/><path d="M13 2v11" stroke="#111" stroke-width="2"/><path d="M21.500 10.500l2.500 2.500-2.500 2.500" fill="none" stroke="#d22" stroke-width="1.200"/><rect x="2.500" y="17" width="11" height="7" fill="#ddd" stroke="#111" stroke-width="1"/><text x="8" y="23" font-size="5.500" font-weight="bold" fill="#111" text-anchor="middle" font-family="Liberation Sans, sans-serif">60°</text></svg>
<!-- status bar -->
<svg style="left:-7px;top:937px" width="16" height="16" viewBox="0 0 16 16"><circle cx="8" cy="8" r="6.500" fill="#e9e9e9" stroke="#aaa" stroke-width="1.200"/><circle cx="8" cy="6.500" r="2.500" fill="#aaa"/><path d="M7.500 9h1.500v4h-1.500z" fill="#aaa"/></svg>
<svg style="left:24px;top:937px" width="16" height="16" viewBox="0 0 16 16"><circle cx="8" cy="8" r="6.500" fill="#fff" stroke="#111" stroke-width="1.400"/><circle cx="8" cy="4.800" r="1.300" fill="#111"/><path d="M6.300 7h2.600v4.500H6.300zM6 11.200h4" stroke="#111" stroke-width=".4" fill="#111"/></svg>
<svg style="left:54px;top:937px" width="16" height="16" viewBox="0 0 16 16"><circle cx="8" cy="8" r="6.500" fill="#e9e9e9" stroke="#aaa" stroke-width="1.200"/><circle cx="8" cy="6" r="2.400" fill="#aaa"/><path d="M3.500 12.500a4.500 3.500 0 0 1 9 0z" fill="#aaa"/></svg>
<div class="a" style="left:81px;top:941px;width:1px;height:9px;background:#9a9a9a"></div>
<div class="t" style="left:92px;top:940px;font-size:13px;letter-spacing:.09px;color:#1a1a1a">Select items to erase or drag across multiple items. Shift=Hide, Ctrl=Soften/Smooth.</div>
<!-- taskbar sliver -->
<div class="a" style="left:0;top:959px;width:1589px;height:4px;background:linear-gradient(#8ea1b8 0,#3e5878 30%,#1c2d48 70%,#182841)"></div>
<div class="a" style="left:0;top:960px;width:25px;height:3px;background:#5d7ea8;border-radius:0 6px 0 0"></div>
<div class="a" style="left:297px;top:959.5px;width:58px;height:3.5px;background:#b9c5d6"></div>
<div class="a" style="left:358px;top:959.5px;width:59px;height:3.5px;background:#aebacb"></div>
<div class="a" style="left:420px;top:959.5px;width:58px;height:3.5px;background:#e4e9f0"></div>
<div class="a" style="left:481px;top:959.5px;width:58px;height:3.5px;background:#aebacb"></div>
<div class="a" style="left:1575px;top:960px;width:14px;height:3px;background:#6c7c92"></div>
</body></html>
